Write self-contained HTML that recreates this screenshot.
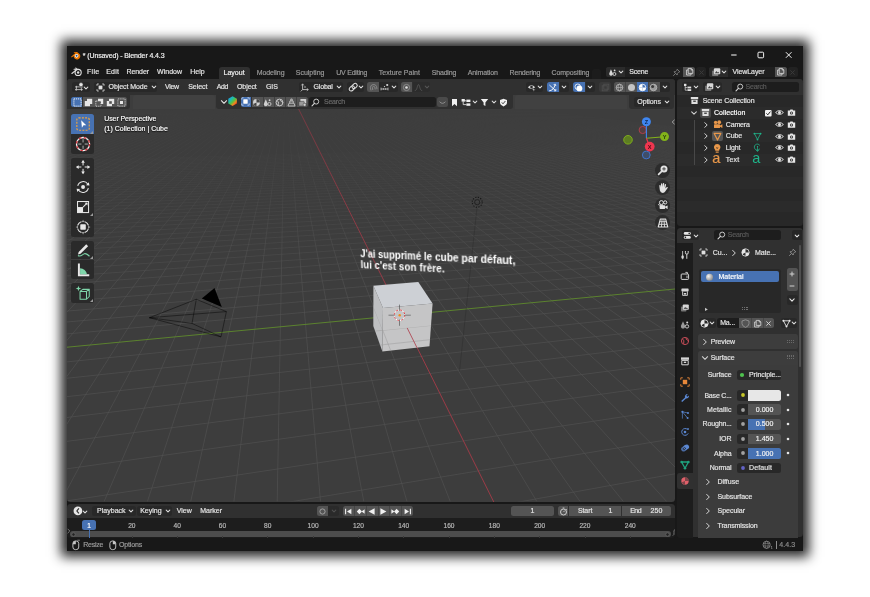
<!DOCTYPE html>
<html><head><meta charset="utf-8"><title>Blender</title>
<style>
html,body{margin:0;padding:0;background:#fff;}
body{width:870px;height:597px;overflow:hidden;position:relative;font-family:"Liberation Sans",sans-serif;}
#win{position:absolute;left:67px;top:46px;width:736px;height:505px;background:#181818;box-shadow:0 0 11px 6px rgba(0,0,0,0.85);}
#ui{position:absolute;left:0;top:0;width:870px;height:597px;overflow:hidden;will-change:transform;}
#ui div,#ui span,#ui svg{position:absolute;}
#ui span{white-space:nowrap;display:block;-webkit-text-stroke:0.18px;}
#ui svg{overflow:visible;}
</style></head><body>
<div id="win"></div>
<div id="ui">
<svg style="left:69.60px;top:49.90px;" width="10.8" height="9.7" viewBox="0 0 10 9"><path d="M1 6.2 L5.2 2.6 L3.6 2.6 L3.6 1.8 L6.6 1.8 L9 4 A3.1 3.1 0 1 1 3.4 5.6 L1.6 7 Z" fill="#ea7600"/><circle cx="6.1" cy="5.4" r="1.7" fill="#fff"/><circle cx="6.1" cy="5.4" r="0.95" fill="#265787"/></svg>
<span style="left:82.80px;top:50.80px;font-size:7.0px;line-height:9.80px;color:#f0f0f0;letter-spacing:-0.119px;">* (Unsaved) - Blender 4.4.3</span>
<svg style="left:729.00px;top:50.00px;" width="10" height="10" viewBox="0 0 10 10"><path d="M2.2 5 H7.6" stroke="#fff" stroke-width="1"/></svg>
<svg style="left:756.00px;top:50.00px;" width="10" height="10" viewBox="0 0 10 10"><rect x="2" y="2.2" width="5.6" height="5.6" rx="0.9" fill="none" stroke="#fff" stroke-width="0.95"/></svg>
<svg style="left:784.00px;top:50.00px;" width="10" height="10" viewBox="0 0 10 10"><path d="M1.9 2.2 L7.5 7.8 M7.5 2.2 L1.9 7.8" stroke="#fff" stroke-width="0.95"/></svg>
<svg style="left:71.20px;top:66.30px;" width="12.1" height="11" viewBox="0 0 11 10"><path d="M0.8 6.8 L5.4 3 L2.8 3 M5.4 3 L4.4 1.8" fill="none" stroke="#dedede" stroke-width="1" stroke-linecap="round"/><circle cx="6.5" cy="5.9" r="2.8" fill="none" stroke="#dedede" stroke-width="1"/><circle cx="6.5" cy="5.9" r="1.1" fill="#dedede"/></svg>
<span style="left:87.00px;top:66.70px;font-size:7.0px;line-height:9.80px;color:#e4e4e4;letter-spacing:0.305px;">File</span>
<span style="left:106.30px;top:66.70px;font-size:7.0px;line-height:9.80px;color:#e4e4e4;letter-spacing:0.159px;">Edit</span>
<span style="left:126.50px;top:66.70px;font-size:7.0px;line-height:9.80px;color:#e4e4e4;letter-spacing:-0.077px;">Render</span>
<span style="left:157.10px;top:66.70px;font-size:7.0px;line-height:9.80px;color:#e4e4e4;letter-spacing:0.000px;">Window</span>
<span style="left:190.20px;top:66.70px;font-size:7.0px;line-height:9.80px;color:#e4e4e4;letter-spacing:0.001px;">Help</span>
<div style="left:218.50px;top:67.30px;width:31.60px;height:12.20px;background:#303030;border-radius:3px 3px 0 0;"></div>
<span style="left:223.60px;top:67.70px;font-size:7.0px;line-height:9.80px;color:#f4f4f4;letter-spacing:-0.003px;">Layout</span>
<span style="left:256.70px;top:67.70px;font-size:7.0px;line-height:9.80px;color:#9a9a9a;letter-spacing:-0.076px;">Modeling</span>
<span style="left:295.80px;top:67.70px;font-size:7.0px;line-height:9.80px;color:#9a9a9a;letter-spacing:-0.022px;">Sculpting</span>
<span style="left:336.20px;top:67.70px;font-size:7.0px;line-height:9.80px;color:#9a9a9a;letter-spacing:-0.217px;">UV Editing</span>
<span style="left:378.70px;top:67.70px;font-size:7.0px;line-height:9.80px;color:#9a9a9a;letter-spacing:0.034px;">Texture Paint</span>
<span style="left:431.80px;top:67.70px;font-size:7.0px;line-height:9.80px;color:#9a9a9a;letter-spacing:-0.199px;">Shading</span>
<span style="left:467.70px;top:67.70px;font-size:7.0px;line-height:9.80px;color:#9a9a9a;letter-spacing:-0.125px;">Animation</span>
<span style="left:509.60px;top:67.70px;font-size:7.0px;line-height:9.80px;color:#9a9a9a;letter-spacing:-0.189px;">Rendering</span>
<span style="left:551.60px;top:67.70px;font-size:7.0px;line-height:9.80px;color:#9a9a9a;letter-spacing:-0.119px;">Compositing</span>
<div style="left:592.00px;top:68.50px;width:9.00px;height:10.50px;background:#1c1c1c;border-radius:2px 2px 0 0;"></div>
<div style="left:606.00px;top:66.70px;width:89.00px;height:10.10px;background:#282828;border-radius:2.5px;"></div>
<div style="left:606.00px;top:66.70px;width:18.50px;height:10.10px;background:#2b2b2b;border-radius:2.5px 0 0 2.5px;"></div>
<div style="left:625.20px;top:66.70px;width:57.80px;height:10.10px;background:#1f1f1f;"></div>
<div style="left:683.00px;top:66.70px;width:12.00px;height:10.10px;background:#555;border-radius:0 2.5px 2.5px 0;"></div>
<svg style="left:608.00px;top:67.50px;" width="9" height="9" viewBox="0 0 9 9"><path d="M2.6 1 L4.6 5.6 A2 2 0 1 1 0.8 5.6 Z" fill="#d8d8d8" transform="translate(0.6,0.3) scale(0.9)"/><circle cx="6.4" cy="6" r="1.5" fill="none" stroke="#d8d8d8" stroke-width="0.9"/><circle cx="6.6" cy="2.4" r="0.9" fill="#d8d8d8"/></svg>
<svg style="left:617.80px;top:69.00px;" width="6" height="6" viewBox="0 0 6 6"><path d="M1.20 2.10 L3 3.90 L4.80 2.10" fill="none" stroke="#dcdcdc" stroke-width="1.05" stroke-linecap="round" stroke-linejoin="round"/></svg>
<span style="left:629.20px;top:66.90px;font-size:7.0px;line-height:9.80px;color:#e4e4e4;letter-spacing:-0.190px;">Scene</span>
<svg style="left:671.50px;top:67.50px;" width="9" height="9" viewBox="0 0 9 9"><path d="M5.2 1.2 L7.8 3.8 L6.6 4.2 L5.4 5.4 L5.2 7 L2 3.8 L3.6 3.6 L4.8 2.4 Z M3.4 5.6 L1.2 7.8" fill="none" stroke="#8a8a8a" stroke-width="0.8" stroke-linejoin="round"/></svg>
<svg style="left:684.50px;top:67.30px;" width="9" height="9" viewBox="0 0 9 9"><path d="M3.2 1.4 H6.2 L7.8 3 V6.4 H3.2 Z M6.2 1.4 V3 H7.8" fill="none" stroke="#e0e0e0" stroke-width="0.8" stroke-linejoin="round"/><path d="M3.2 3 H1.6 V8 H6 V6.4" fill="none" stroke="#e0e0e0" stroke-width="0.8" stroke-linejoin="round"/></svg>
<div style="left:695.60px;top:66.70px;width:10.40px;height:10.10px;background:#222;border-radius:2.5px;"></div>
<svg style="left:696.50px;top:67.50px;" width="9" height="9" viewBox="0 0 9 9"><path d="M2.4 2.4 L6.6 6.6 M6.6 2.4 L2.4 6.6" stroke="#3c3c3c" stroke-width="0.9"/></svg>
<div style="left:709.30px;top:66.70px;width:77.70px;height:10.10px;background:#282828;border-radius:2.5px;"></div>
<div style="left:709.30px;top:66.70px;width:18.30px;height:10.10px;background:#2b2b2b;border-radius:2.5px 0 0 2.5px;"></div>
<div style="left:728.40px;top:66.70px;width:46.50px;height:10.10px;background:#1f1f1f;"></div>
<div style="left:774.90px;top:66.70px;width:12.00px;height:10.10px;background:#555;border-radius:0 2.5px 2.5px 0;"></div>
<svg style="left:710.70px;top:66.80px;" width="10.2" height="10.2" viewBox="0 0 9 9"><rect x="1" y="3" width="5.4" height="5" rx="0.8" fill="#777"/><rect x="2.6" y="1.2" width="5.6" height="5.2" rx="0.8" fill="#d8d8d8"/><path d="M3.4 5.6 L4.8 3.6 L5.8 4.8 L6.4 4.2 L7.4 5.6 Z" fill="#444"/></svg>
<svg style="left:721.00px;top:69.00px;" width="6" height="6" viewBox="0 0 6 6"><path d="M1.20 2.10 L3 3.90 L4.80 2.10" fill="none" stroke="#dcdcdc" stroke-width="1.05" stroke-linecap="round" stroke-linejoin="round"/></svg>
<span style="left:732.60px;top:66.90px;font-size:7.0px;line-height:9.80px;color:#e4e4e4;letter-spacing:-0.084px;">ViewLayer</span>
<svg style="left:776.40px;top:67.30px;" width="9" height="9" viewBox="0 0 9 9"><path d="M3.2 1.4 H6.2 L7.8 3 V6.4 H3.2 Z M6.2 1.4 V3 H7.8" fill="none" stroke="#e0e0e0" stroke-width="0.8" stroke-linejoin="round"/><path d="M3.2 3 H1.6 V8 H6 V6.4" fill="none" stroke="#e0e0e0" stroke-width="0.8" stroke-linejoin="round"/></svg>
<div style="left:787.50px;top:66.70px;width:10.50px;height:10.10px;background:#222;border-radius:2.5px;"></div>
<svg style="left:788.30px;top:67.50px;" width="9" height="9" viewBox="0 0 9 9"><path d="M2.4 2.4 L6.6 6.6 M6.6 2.4 L2.4 6.6" stroke="#3c3c3c" stroke-width="0.9"/></svg>
<div id="vp" style="left:67px;top:79.3px;width:608.4px;height:422.4px;background:#3d3d3d;border-radius:3.5px;overflow:hidden;">
<svg style="left:0;top:0" width="608.4" height="422.4" viewBox="0 0 608.4 422.4">
<defs><linearGradient id="fade" gradientUnits="userSpaceOnUse" x1="0" y1="26.7" x2="0" y2="190.7"><stop offset="0" stop-color="#000"/><stop offset="1" stop-color="#fff"/></linearGradient>
<linearGradient id="fade2" gradientUnits="userSpaceOnUse" x1="0" y1="45.7" x2="0" y2="230.7"><stop offset="0" stop-color="#000"/><stop offset="1" stop-color="#fff"/></linearGradient>
<linearGradient id="redg" gradientUnits="userSpaceOnUse" x1="0" y1="20.7" x2="0" y2="220.7"><stop offset="0" stop-color="#7a3942"/><stop offset="1" stop-color="#a53a47"/></linearGradient>
<mask id="gm"><rect x="0" y="0" width="608.4" height="422.4" fill="url(#fade)"/></mask>
<mask id="gm2"><rect x="0" y="0" width="608.4" height="422.4" fill="url(#fade2)"/></mask></defs>
<g mask="url(#gm)"><path d="M138.4 16.7 L-2197.6 427.4 M139.8 16.7 L-2153.8 427.4 M141.3 16.7 L-2110.0 427.4 M142.7 16.7 L-2066.3 427.4 M144.1 16.7 L-2022.5 427.4 M145.6 16.7 L-1978.7 427.4 M147.0 16.7 L-1934.9 427.4 M148.5 16.7 L-1891.1 427.4 M149.9 16.7 L-1847.4 427.4 M151.4 16.7 L-1803.6 427.4 M152.8 16.7 L-1759.8 427.4 M154.2 16.7 L-1716.0 427.4 M155.7 16.7 L-1672.3 427.4 M157.1 16.7 L-1628.5 427.4 M158.6 16.7 L-1584.7 427.4 M160.0 16.7 L-1540.9 427.4 M161.5 16.7 L-1497.2 427.4 M162.9 16.7 L-1453.4 427.4 M164.3 16.7 L-1409.6 427.4 M165.8 16.7 L-1365.8 427.4 M167.2 16.7 L-1322.1 427.4 M168.7 16.7 L-1278.3 427.4 M170.1 16.7 L-1234.5 427.4 M171.6 16.7 L-1190.7 427.4 M173.0 16.7 L-1147.0 427.4 M174.4 16.7 L-1103.2 427.4 M175.9 16.7 L-1059.4 427.4 M177.3 16.7 L-1015.6 427.4 M178.8 16.7 L-971.8 427.4 M180.2 16.7 L-928.1 427.4 M181.7 16.7 L-884.3 427.4 M183.1 16.7 L-840.5 427.4 M184.5 16.7 L-796.7 427.4 M186.0 16.7 L-753.0 427.4 M187.4 16.7 L-709.2 427.4 M188.9 16.7 L-665.4 427.4 M190.3 16.7 L-621.6 427.4 M191.8 16.7 L-577.9 427.4 M193.2 16.7 L-534.1 427.4 M194.7 16.7 L-490.3 427.4 M196.1 16.7 L-446.5 427.4 M197.5 16.7 L-402.8 427.4 M199.0 16.7 L-359.0 427.4 M200.4 16.7 L-315.2 427.4 M201.9 16.7 L-271.4 427.4 M203.3 16.7 L-227.7 427.4 M204.8 16.7 L-183.9 427.4 M206.2 16.7 L-140.1 427.4 M207.6 16.7 L-96.3 427.4 M209.1 16.7 L-52.6 427.4 M210.5 16.7 L-8.8 427.4 M212.0 16.7 L35.0 427.4 M213.4 16.7 L78.8 427.4 M214.9 16.7 L122.6 427.4 M216.3 16.7 L166.3 427.4 M217.7 16.7 L210.1 427.4 M219.2 16.7 L253.9 427.4 M220.6 16.7 L297.7 427.4 M222.1 16.7 L341.4 427.4 M223.5 16.7 L385.2 427.4 M226.4 16.7 L472.8 427.4 M227.8 16.7 L516.5 427.4 M229.3 16.7 L560.3 427.4 M230.7 16.7 L604.1 427.4 M232.2 16.7 L647.9 427.4 M233.6 16.7 L691.6 427.4 M235.1 16.7 L735.4 427.4 M236.5 16.7 L779.2 427.4 M237.9 16.7 L823.0 427.4 M239.4 16.7 L866.7 427.4 M240.8 16.7 L910.5 427.4 M242.3 16.7 L954.3 427.4 M243.7 16.7 L998.1 427.4 M245.2 16.7 L1041.9 427.4 M246.6 16.7 L1085.6 427.4 M248.0 16.7 L1129.4 427.4 M249.5 16.7 L1173.2 427.4 M250.9 16.7 L1217.0 427.4 M252.4 16.7 L1260.7 427.4 M253.8 16.7 L1304.5 427.4 M255.3 16.7 L1348.3 427.4 M256.7 16.7 L1392.1 427.4 M258.1 16.7 L1435.8 427.4 M259.6 16.7 L1479.6 427.4 M261.0 16.7 L1523.4 427.4 M262.5 16.7 L1567.2 427.4 M263.9 16.7 L1610.9 427.4 M265.4 16.7 L1654.7 427.4 M266.8 16.7 L1698.5 427.4 M268.2 16.7 L1742.3 427.4 M269.7 16.7 L1786.0 427.4 M271.1 16.7 L1829.8 427.4 M272.6 16.7 L1873.6 427.4 M274.0 16.7 L1917.4 427.4 M275.5 16.7 L1961.1 427.4 M276.9 16.7 L2004.9 427.4 M278.3 16.7 L2048.7 427.4 M279.8 16.7 L2092.5 427.4 M281.2 16.7 L2136.3 427.4 M282.7 16.7 L2180.0 427.4 M284.1 16.7 L2223.8 427.4 M285.6 16.7 L2267.6 427.4 M287.0 16.7 L2311.4 427.4 M288.4 16.7 L2355.1 427.4 M289.9 16.7 L2398.9 427.4 M291.3 16.7 L2442.7 427.4 M292.8 16.7 L2486.5 427.4 M294.2 16.7 L2530.2 427.4 M295.7 16.7 L2574.0 427.4 M297.1 16.7 L2617.8 427.4 M298.6 16.7 L2661.6 427.4 M300.0 16.7 L2705.3 427.4 M301.4 16.7 L2749.1 427.4 M302.9 16.7 L2792.9 427.4 M304.3 16.7 L2836.7 427.4 M305.8 16.7 L2880.4 427.4 M307.2 16.7 L2924.2 427.4 M308.7 16.7 L2968.0 427.4 M310.1 16.7 L3011.8 427.4 M311.5 16.7 L3055.6 427.4 M313.0 16.7 L3099.3 427.4 M314.4 16.7 L3143.1 427.4 M315.9 16.7 L3186.9 427.4 M317.3 16.7 L3230.7 427.4 M318.8 16.7 L3274.4 427.4 M320.2 16.7 L3318.2 427.4 M321.6 16.7 L3362.0 427.4 M323.1 16.7 L3405.8 427.4 M324.5 16.7 L3449.5 427.4 M326.0 16.7 L3493.3 427.4 M327.4 16.7 L3537.1 427.4 M328.9 16.7 L3580.9 427.4 M330.3 16.7 L3624.6 427.4 M331.7 16.7 L3668.4 427.4 M333.2 16.7 L3712.2 427.4 M334.6 16.7 L3756.0 427.4 M336.1 16.7 L3799.7 427.4 M337.5 16.7 L3843.5 427.4 M339.0 16.7 L3887.3 427.4" stroke="#525252" stroke-width="0.65" fill="none"/></g>
<g mask="url(#gm2)"><path d="M-5.0 81.9 L613.4 64.3 M-5.0 83.2 L613.4 65.3 M-5.0 84.5 L613.4 66.3 M-5.0 85.8 L613.4 67.3 M-5.0 87.2 L613.4 68.4 M-5.0 88.6 L613.4 69.5 M-5.0 90.1 L613.4 70.6 M-5.0 91.6 L613.4 71.8 M-5.0 93.2 L613.4 73.1 M-5.0 94.9 L613.4 74.3 M-5.0 96.6 L613.4 75.7 M-5.0 98.3 L613.4 77.0 M-5.0 100.2 L613.4 78.5 M-5.0 102.1 L613.4 80.0 M-5.0 104.1 L613.4 81.5 M-5.0 106.1 L613.4 83.1 M-5.0 108.3 L613.4 84.8 M-5.0 110.5 L613.4 86.5 M-5.0 112.9 L613.4 88.3 M-5.0 115.3 L613.4 90.2 M-5.0 117.9 L613.4 92.2 M-5.0 120.5 L613.4 94.3 M-5.0 123.3 L613.4 96.5 M-5.0 126.3 L613.4 98.8 M-5.0 129.3 L613.4 101.2 M-5.0 132.6 L613.4 103.7 M-5.0 136.0 L613.4 106.3 M-5.0 139.6 L613.4 109.1 M-5.0 143.4 L613.4 112.1 M-5.0 147.4 L613.4 115.2 M-5.0 151.6 L613.4 118.5 M-5.0 156.1 L613.4 122.0 M-5.0 160.9 L613.4 125.7 M-5.0 166.0 L613.4 129.7 M-5.0 171.4 L613.4 133.9 M-5.0 177.2 L613.4 138.4 M-5.0 183.4 L613.4 143.2 M-5.0 190.1 L613.4 148.4 M-5.0 197.3 L613.4 154.0 M-5.0 205.1 L613.4 160.0 M-5.0 213.5 L613.4 166.5 M-5.0 222.6 L613.4 173.6 M-5.0 232.5 L613.4 181.4 M-5.0 243.4 L613.4 189.8 M-5.0 255.4 L613.4 199.2 M-5.0 283.4 L613.4 220.9 M-5.0 299.8 L613.4 233.6 M-5.0 318.2 L613.4 248.0 M-5.0 339.1 L613.4 264.2 M-5.0 363.0 L613.4 282.8 M-5.0 390.5 L613.4 304.2 M-5.0 422.6 L613.4 329.1 M-5.0 460.5 L613.4 358.6 M-5.0 505.8 L613.4 393.8 M-5.0 561.2 L613.4 436.9 M-5.0 630.2 L613.4 490.5 M-5.0 718.7 L613.4 559.3 M-5.0 836.2 L613.4 650.6 M-5.0 999.9 L613.4 777.9 M-5.0 1243.6 L613.4 967.3 M-5.0 1644.9 L613.4 1279.3 M-5.0 2429.9 L613.4 1889.6 M-5.0 4652.6 L613.4 3617.5" stroke="#525252" stroke-width="0.65" fill="none"/></g>
<path d="M225.0 16.7 L429.0 427.4" stroke="url(#redg)" stroke-width="0.9" fill="none"/>
<path d="M-5.0 268.7 L613.4 209.5" stroke="#5f8a2c" stroke-width="0.9" fill="none"/>
</svg>
</div>
<div style="left:67.00px;top:79.30px;width:608.40px;height:15.70px;background:#303030;border-radius:3.5px 3.5px 0 0;"></div>
<div style="left:67.00px;top:94.80px;width:63.00px;height:14.00px;background:#303030;border-radius:0 0 3px 0;"></div>
<div style="left:132.60px;top:95.30px;width:82.10px;height:13.50px;background:#414141;border-radius:3px 3px 0 0;"></div>
<div style="left:216.00px;top:94.80px;width:297.00px;height:14.00px;background:#303030;border-radius:0 0 3px 3px;"></div>
<div style="left:514.50px;top:95.30px;width:112.90px;height:13.50px;background:#414141;border-radius:3px 3px 0 0;"></div>
<div style="left:628.80px;top:94.80px;width:45.00px;height:14.10px;background:#303030;border-radius:0 0 3px 3px;"></div>
<div style="left:72.10px;top:82.00px;width:17.70px;height:10.30px;background:#282828;border-radius:2.5px;"></div>
<svg style="left:73.80px;top:82.20px;" width="10" height="10" viewBox="0 0 10 10"><path d="M1 4.9 H8.8 M1 7.6 H8.8 M2.6 3.8 L2.2 8.8 M7.2 5.4 L7.6 8.8" stroke="#cfcfcf" stroke-width="0.8" fill="none"/><circle cx="7" cy="2.7" r="2.1" fill="#e6e6e6" stroke="#282828" stroke-width="0.5"/></svg>
<svg style="left:83.30px;top:84.50px;" width="6" height="6" viewBox="0 0 6 6"><path d="M1.20 2.10 L3 3.90 L4.80 2.10" fill="none" stroke="#dcdcdc" stroke-width="1.05" stroke-linecap="round" stroke-linejoin="round"/></svg>
<div style="left:94.10px;top:82.00px;width:63.20px;height:10.30px;background:#282828;border-radius:2.5px;"></div>
<svg style="left:95.60px;top:82.60px;" width="9" height="9" viewBox="0 0 9 9"><rect x="2.6" y="2.6" width="3.8" height="3.8" fill="#e0e0e0"/><path d="M1 2.8 V1 H2.8 M6.2 1 H8 V2.8 M8 6.2 V8 H6.2 M2.8 8 H1 V6.2" fill="none" stroke="#e0e0e0" stroke-width="0.8"/></svg>
<span style="left:108.50px;top:82.20px;font-size:7.0px;line-height:9.80px;color:#e4e4e4;letter-spacing:-0.062px;">Object Mode</span>
<svg style="left:150.60px;top:84.30px;" width="6" height="6" viewBox="0 0 6 6"><path d="M1.20 2.10 L3 3.90 L4.80 2.10" fill="none" stroke="#dcdcdc" stroke-width="1.05" stroke-linecap="round" stroke-linejoin="round"/></svg>
<span style="left:164.90px;top:82.20px;font-size:7.0px;line-height:9.80px;color:#e4e4e4;letter-spacing:-0.287px;">View</span>
<span style="left:188.20px;top:82.20px;font-size:7.0px;line-height:9.80px;color:#e4e4e4;letter-spacing:-0.043px;">Select</span>
<span style="left:216.80px;top:82.20px;font-size:7.0px;line-height:9.80px;color:#e4e4e4;letter-spacing:-0.385px;">Add</span>
<span style="left:237.00px;top:82.20px;font-size:7.0px;line-height:9.80px;color:#e4e4e4;letter-spacing:-0.089px;">Object</span>
<span style="left:266.00px;top:82.20px;font-size:7.0px;line-height:9.80px;color:#e4e4e4;letter-spacing:-0.086px;">GIS</span>
<div style="left:298.60px;top:82.00px;width:44.00px;height:10.30px;background:#282828;border-radius:2.5px;"></div>
<svg style="left:299.80px;top:82.60px;" width="9" height="9" viewBox="0 0 9 9"><path d="M2.6 1.2 V6.6 H8 M2.6 6.6 L0.8 8.4" fill="none" stroke="#d8d8d8" stroke-width="0.8"/><path d="M1.4 2.4 L2.6 0.8 L3.8 2.4 M6.8 5.4 L8.4 6.6 L6.8 7.8" fill="none" stroke="#d8d8d8" stroke-width="0.7"/><circle cx="5" cy="4" r="0.7" fill="#d8d8d8"/></svg>
<span style="left:313.50px;top:82.20px;font-size:7.0px;line-height:9.80px;color:#e4e4e4;letter-spacing:-0.172px;">Global</span>
<svg style="left:335.80px;top:84.30px;" width="6" height="6" viewBox="0 0 6 6"><path d="M1.20 2.10 L3 3.90 L4.80 2.10" fill="none" stroke="#dcdcdc" stroke-width="1.05" stroke-linecap="round" stroke-linejoin="round"/></svg>
<div style="left:347.00px;top:82.00px;width:17.00px;height:10.30px;background:#282828;border-radius:2.5px;"></div>
<svg style="left:347.90px;top:82.00px;" width="10.4" height="10.4" viewBox="0 0 9 9"><rect x="0.4" y="2.8" width="5" height="3.4" rx="1.7" fill="none" stroke="#e0e0e0" stroke-width="0.9" transform="rotate(-42 4.5 4.5)"/><rect x="3.6" y="2.8" width="5" height="3.4" rx="1.7" fill="none" stroke="#e0e0e0" stroke-width="0.9" transform="rotate(-42 4.5 4.5)"/></svg>
<svg style="left:357.80px;top:84.30px;" width="6" height="6" viewBox="0 0 6 6"><path d="M1.20 2.10 L3 3.90 L4.80 2.10" fill="none" stroke="#dcdcdc" stroke-width="1.05" stroke-linecap="round" stroke-linejoin="round"/></svg>
<div style="left:367.30px;top:82.00px;width:11.40px;height:10.30px;background:#545454;border-radius:2.5px 0 0 2.5px;"></div>
<svg style="left:368.50px;top:82.60px;" width="9" height="9" viewBox="0 0 9 9"><path d="M2 7.4 L1.4 4.6 A3.2 3.2 0 0 1 7.6 3.6 L8 6.2 M3.8 7 L3.4 4.6 A1.3 1.3 0 0 1 5.8 4 L6.2 6.4" fill="none" stroke="#8c8c8c" stroke-width="0.9"/></svg>
<div style="left:379.30px;top:82.00px;width:18.40px;height:10.30px;background:#282828;border-radius:0 2.5px 2.5px 0;"></div>
<svg style="left:380.20px;top:82.60px;" width="9" height="9" viewBox="0 0 9 9"><path d="M1 6 H8 M1 4.6 V7.4 M8 4.6 V7.4 M3.4 5.2 V6.8 M5.6 5.2 V6.8" stroke="#d8d8d8" stroke-width="0.7" fill="none"/><circle cx="7.2" cy="2" r="1.1" fill="#d8d8d8"/><circle cx="4.5" cy="3.6" r="0.6" fill="#d8d8d8"/></svg>
<svg style="left:390.90px;top:84.30px;" width="6" height="6" viewBox="0 0 6 6"><path d="M1.20 2.10 L3 3.90 L4.80 2.10" fill="none" stroke="#dcdcdc" stroke-width="1.05" stroke-linecap="round" stroke-linejoin="round"/></svg>
<div style="left:400.70px;top:82.00px;width:11.40px;height:10.30px;background:#545454;border-radius:2.5px 0 0 2.5px;"></div>
<svg style="left:401.90px;top:82.60px;" width="9" height="9" viewBox="0 0 9 9"><circle cx="4.5" cy="4.5" r="3.1" fill="none" stroke="#999" stroke-width="0.8"/><circle cx="4.5" cy="4.5" r="1.3" fill="#e0e0e0"/></svg>
<div style="left:412.70px;top:82.00px;width:17.30px;height:10.30px;background:#2c2c2c;border-radius:0 2.5px 2.5px 0;"></div>
<svg style="left:414.40px;top:82.60px;" width="9" height="9" viewBox="0 0 9 9"><path d="M0.8 7.6 C3.4 7.6 3.2 1.6 4.5 1.6 C5.8 1.6 5.6 7.6 8.2 7.6" fill="none" stroke="#5a5a5a" stroke-width="0.8"/></svg>
<svg style="left:423.60px;top:84.30px;" width="6" height="6" viewBox="0 0 6 6"><path d="M1.20 2.10 L3 3.90 L4.80 2.10" fill="none" stroke="#555" stroke-width="1.05" stroke-linecap="round" stroke-linejoin="round"/></svg>
<div style="left:525.50px;top:82.00px;width:17.70px;height:10.30px;background:#282828;border-radius:2.5px;"></div>
<svg style="left:526.80px;top:82.60px;" width="9" height="9" viewBox="0 0 9 9"><path d="M0.8 4.2 Q4.5 0.4 8.2 4.2 Q4.5 7.4 0.8 4.2 Z" fill="#d8d8d8"/><circle cx="4.5" cy="4" r="1.3" fill="#282828"/><path d="M5 5.4 L7 8.4 L7.4 6.8 L8.8 6.6 Z" fill="#d8d8d8" stroke="#282828" stroke-width="0.4"/></svg>
<svg style="left:537.00px;top:84.30px;" width="6" height="6" viewBox="0 0 6 6"><path d="M1.20 2.10 L3 3.90 L4.80 2.10" fill="none" stroke="#dcdcdc" stroke-width="1.05" stroke-linecap="round" stroke-linejoin="round"/></svg>
<div style="left:547.00px;top:82.00px;width:11.90px;height:10.30px;background:#4772b3;border-radius:2.5px 0 0 2.5px;"></div>
<svg style="left:548.40px;top:82.60px;" width="9" height="9" viewBox="0 0 9 9"><path d="M1.2 7.8 Q5.6 7.4 7 2" fill="none" stroke="#fff" stroke-width="0.9"/><path d="M1.4 2 L7.6 7.6" stroke="#fff" stroke-width="0.9"/><path d="M5.6 1.6 L7.4 1.2 L7.8 3" fill="none" stroke="#fff" stroke-width="0.8"/><path d="M6 7.8 L7.8 7.8 L7.8 6" fill="none" stroke="#fff" stroke-width="0.8"/></svg>
<div style="left:559.50px;top:82.00px;width:9.50px;height:10.30px;background:#282828;border-radius:0 2.5px 2.5px 0;"></div>
<svg style="left:561.20px;top:84.30px;" width="6" height="6" viewBox="0 0 6 6"><path d="M1.20 2.10 L3 3.90 L4.80 2.10" fill="none" stroke="#dcdcdc" stroke-width="1.05" stroke-linecap="round" stroke-linejoin="round"/></svg>
<div style="left:573.00px;top:82.00px;width:11.90px;height:10.30px;background:#4772b3;border-radius:2.5px 0 0 2.5px;"></div>
<svg style="left:574.40px;top:82.60px;" width="9" height="9" viewBox="0 0 9 9"><circle cx="3.8" cy="3.8" r="2.8" fill="none" stroke="#fff" stroke-width="0.8"/><circle cx="5.4" cy="5.4" r="2.9" fill="#fff"/></svg>
<div style="left:585.50px;top:82.00px;width:9.50px;height:10.30px;background:#282828;border-radius:0 2.5px 2.5px 0;"></div>
<svg style="left:587.20px;top:84.30px;" width="6" height="6" viewBox="0 0 6 6"><path d="M1.20 2.10 L3 3.90 L4.80 2.10" fill="none" stroke="#dcdcdc" stroke-width="1.05" stroke-linecap="round" stroke-linejoin="round"/></svg>
<div style="left:599.30px;top:82.00px;width:11.70px;height:10.30px;background:#393939;border-radius:2.5px;"></div>
<svg style="left:600.70px;top:82.60px;" width="9" height="9" viewBox="0 0 9 9"><rect x="1.2" y="2.8" width="5" height="5" fill="none" stroke="#505050" stroke-width="0.8"/><rect x="2.8" y="1.2" width="5" height="5" fill="none" stroke="#505050" stroke-width="0.8"/></svg>
<div style="left:614.00px;top:82.00px;width:45.50px;height:10.30px;background:#545454;border-radius:2.5px 0 0 2.5px;"></div>
<div style="left:625.40px;top:82.00px;width:0.40px;height:10.30px;background:#444;"></div>
<div style="left:648.20px;top:82.00px;width:0.40px;height:10.30px;background:#444;"></div>
<div style="left:637.00px;top:82.00px;width:11.30px;height:10.30px;background:#4772b3;"></div>
<svg style="left:615.30px;top:82.60px;" width="9" height="9" viewBox="0 0 9 9"><circle cx="4.5" cy="4.5" r="3.3" fill="none" stroke="#bdbdbd" stroke-width="0.8"/><ellipse cx="4.5" cy="4.5" rx="1.5" ry="3.3" fill="none" stroke="#bdbdbd" stroke-width="0.6"/><path d="M1.2 4.5 H7.8" stroke="#bdbdbd" stroke-width="0.6"/></svg>
<svg style="left:626.70px;top:82.60px;" width="9" height="9" viewBox="0 0 9 9"><circle cx="4.5" cy="4.5" r="3.5" fill="#c4c4c4"/></svg>
<svg style="left:638.10px;top:82.60px;" width="9" height="9" viewBox="0 0 9 9"><circle cx="4.5" cy="4.5" r="3.3" fill="none" stroke="#fff" stroke-width="0.8"/><path d="M4.5 1.2 A3.3 3.3 0 0 0 1.2 4.5 H4.5 Z" fill="#fff"/><path d="M4.5 4.5 H7.8 A3.3 3.3 0 0 1 4.5 7.8 Z" fill="#fff"/><path d="M4.5 4.5 V7.8 A3.3 3.3 0 0 1 1.2 4.5 Z" fill="#fff"/></svg>
<svg style="left:649.40px;top:82.60px;" width="9" height="9" viewBox="0 0 9 9"><circle cx="4.5" cy="4.5" r="3.3" fill="#9a9a9a" stroke="#bdbdbd" stroke-width="0.8"/><circle cx="3.6" cy="3.6" r="1.5" fill="#3a3a3a"/></svg>
<div style="left:660.10px;top:82.00px;width:9.50px;height:10.30px;background:#282828;border-radius:0 2.5px 2.5px 0;"></div>
<svg style="left:661.90px;top:84.30px;" width="6" height="6" viewBox="0 0 6 6"><path d="M1.20 2.10 L3 3.90 L4.80 2.10" fill="none" stroke="#dcdcdc" stroke-width="1.05" stroke-linecap="round" stroke-linejoin="round"/></svg>
<div style="left:71.40px;top:96.60px;width:11.10px;height:10.70px;background:#4772b3;border-radius:2.5px 0 0 2.5px;"></div>
<div style="left:83.00px;top:96.60px;width:10.60px;height:10.70px;background:#545454;"></div>
<div style="left:94.10px;top:96.60px;width:10.60px;height:10.70px;background:#545454;"></div>
<div style="left:105.20px;top:96.60px;width:10.60px;height:10.70px;background:#545454;"></div>
<div style="left:116.30px;top:96.60px;width:10.60px;height:10.70px;background:#545454;border-radius:0 2.5px 2.5px 0;"></div>
<svg style="left:72.50px;top:97.70px;" width="9" height="9" viewBox="0 0 9 9"><rect x="0.9" y="0.9" width="7.2" height="7.2" fill="none" stroke="#fff" stroke-width="0.9" stroke-dasharray="1.2 0.8"/></svg>
<svg style="left:83.80px;top:97.70px;" width="9" height="9" viewBox="0 0 9 9"><rect x="0.8" y="3" width="5.2" height="5.2" fill="#e6e6e6"/><rect x="3" y="0.8" width="5.2" height="5.2" fill="#e6e6e6"/></svg>
<svg style="left:94.90px;top:97.70px;" width="9" height="9" viewBox="0 0 9 9"><rect x="0.8" y="3" width="5.2" height="5.2" fill="none" stroke="#e6e6e6" stroke-width="0.8" stroke-dasharray="1 0.8"/><path d="M3 0.8 H8.2 V6 H6 V3 H3 Z" fill="#e6e6e6"/></svg>
<svg style="left:106.00px;top:97.70px;" width="9" height="9" viewBox="0 0 9 9"><rect x="0.8" y="3" width="5.2" height="5.2" fill="#e6e6e6"/><rect x="3" y="0.8" width="5.2" height="5.2" fill="#e6e6e6"/><rect x="3.2" y="3.2" width="2.6" height="2.6" fill="#545454"/></svg>
<svg style="left:117.10px;top:97.70px;" width="9" height="9" viewBox="0 0 9 9"><rect x="0.9" y="0.9" width="7.2" height="7.2" fill="none" stroke="#e6e6e6" stroke-width="0.8" stroke-dasharray="1 0.8"/><rect x="3" y="3" width="3" height="3" fill="#e6e6e6"/></svg>
<svg style="left:220.50px;top:98.80px;" width="6" height="6" viewBox="0 0 6 6"><path d="M0.39 1.70 L3 4.30 L5.61 1.70" fill="none" stroke="#eaeaea" stroke-width="1.05" stroke-linecap="round" stroke-linejoin="round"/></svg>
<svg style="left:228.20px;top:96.40px;" width="9.2" height="10.4" viewBox="0 0 9.2 10.4"><defs><linearGradient id="hx" x1="0.15" y1="0.1" x2="0.85" y2="0.9"><stop offset="0" stop-color="#1fa0e8"/><stop offset="0.3" stop-color="#22c0a0"/><stop offset="0.55" stop-color="#58c040"/><stop offset="0.78" stop-color="#f08a20"/><stop offset="1" stop-color="#f03020"/></linearGradient></defs><path d="M4.6 0.3 L8.9 2.8 V7.6 L4.6 10.1 L0.3 7.6 V2.8 Z" fill="url(#hx)"/></svg>
<div style="left:240.60px;top:96.60px;width:10.70px;height:10.70px;background:#4772b3;border-radius:2.5px 0 0 2.5px;"></div>
<svg style="left:241.40px;top:97.40px;" width="9" height="9" viewBox="0 0 9 9"><rect x="2.3" y="2.3" width="4.4" height="4.4" rx="0.4" fill="#fff"/><path d="M0.8 2.6 V0.8 H2.6 M6.4 0.8 H8.2 V2.6 M8.2 6.4 V8.2 H6.4 M2.6 8.2 H0.8 V6.4" fill="none" stroke="#c8d6ee" stroke-width="0.8"/></svg>
<div style="left:251.60px;top:96.60px;width:56.20px;height:10.70px;background:#545454;border-radius:0 2.5px 2.5px 0;"></div>
<div style="left:262.60px;top:96.60px;width:0.50px;height:10.70px;background:#3f3f3f;"></div>
<div style="left:273.80px;top:96.60px;width:0.50px;height:10.70px;background:#3f3f3f;"></div>
<div style="left:285.00px;top:96.60px;width:0.50px;height:10.70px;background:#3f3f3f;"></div>
<div style="left:296.30px;top:96.60px;width:0.50px;height:10.70px;background:#3f3f3f;"></div>
<svg style="left:252.30px;top:97.70px;" width="9" height="9" viewBox="0 0 9 9"><circle cx="4.5" cy="4.5" r="3.4" fill="#d0d0d0"/><path d="M4.5 4.5 L4.5 1.1 A3.4 3.4 0 0 1 7.9 4.5 Z" fill="#444"/><path d="M4.5 4.5 L1.4 6 A3.4 3.4 0 0 0 4.5 7.9 Z" fill="#444"/></svg>
<svg style="left:263.40px;top:97.70px;" width="9" height="9" viewBox="0 0 9 9"><path d="M2.8 1.2 L4.6 5.4 A2 2 0 1 1 1 5.4 Z" fill="#cfcfcf"/><circle cx="6.4" cy="6" r="1.6" fill="none" stroke="#cfcfcf" stroke-width="0.9"/><circle cx="6.6" cy="2.2" r="0.9" fill="#cfcfcf"/></svg>
<svg style="left:275.10px;top:97.70px;" width="9" height="9" viewBox="0 0 9 9"><circle cx="4.5" cy="4.5" r="3.4" fill="none" stroke="#cfcfcf" stroke-width="0.9"/><path d="M2 2.6 Q4 3.6 3.4 5.4 T4 7.6 M5.6 1.4 Q5 3 6.6 3.6 T7.6 5.4" fill="none" stroke="#cfcfcf" stroke-width="0.9"/></svg>
<svg style="left:287.00px;top:97.70px;" width="9" height="9" viewBox="0 0 9 9"><path d="M1 8 H8 L7 5.2 H2 Z M2.8 5.2 V3 H6.2 V5.2 M3.8 3 V1 H5.2 V3" fill="none" stroke="#cfcfcf" stroke-width="0.8" stroke-linejoin="round"/></svg>
<svg style="left:297.90px;top:97.70px;" width="9" height="9" viewBox="0 0 9 9"><rect x="2.4" y="1" width="5.8" height="4.6" rx="0.6" fill="#cfcfcf"/><rect x="0.8" y="3.4" width="5.4" height="4.6" rx="0.6" fill="#9a9a9a" stroke="#303030" stroke-width="0.5"/><circle cx="6.6" cy="6.8" r="1.5" fill="#cfcfcf" stroke="#303030" stroke-width="0.4"/></svg>
<div style="left:309.00px;top:96.60px;width:126.60px;height:10.70px;background:#1d1d1d;border-radius:2.5px;"></div>
<svg style="left:310.50px;top:97.90px;" width="9" height="9" viewBox="0 0 9 9"><circle cx="5.2" cy="3.6" r="2.5" fill="none" stroke="#d8d8d8" stroke-width="0.9"/><path d="M3.4 5.4 L1 7.9" stroke="#d8d8d8" stroke-width="1.1" stroke-linecap="round"/></svg>
<span style="left:323.90px;top:97.10px;font-size:7.0px;line-height:9.80px;color:#6a6a6a;letter-spacing:-0.180px;">Search</span>
<div style="left:436.90px;top:96.60px;width:11.40px;height:10.70px;background:#4a4a4a;border-radius:2.5px;"></div>
<svg style="left:438.10px;top:97.70px;" width="9" height="9" viewBox="0 0 9 9"><path d="M1.8 4 Q4.5 7 7.2 4" fill="none" stroke="#9a9a9a" stroke-width="0.8" stroke-linecap="round"/></svg>
<svg style="left:449.70px;top:97.70px;" width="9" height="9" viewBox="0 0 9 9"><path d="M2 1 H7 V8.2 L4.5 6 L2 8.2 Z" fill="#f0f0f0"/></svg>
<svg style="left:461.00px;top:97.70px;" width="10" height="9" viewBox="0 0 10 9"><rect x="0.6" y="1" width="3.2" height="2.6" fill="#f0f0f0"/><rect x="5.4" y="1.6" width="4" height="2.4" fill="#f0f0f0"/><rect x="5.4" y="5.4" width="4" height="2.4" fill="#f0f0f0"/><path d="M2.2 3.6 V6.6 H5.4 M2.2 2.8 H5.4" fill="none" stroke="#f0f0f0" stroke-width="0.8"/></svg>
<svg style="left:471.80px;top:99.20px;" width="6" height="6" viewBox="0 0 6 6"><path d="M1.20 2.10 L3 3.90 L4.80 2.10" fill="none" stroke="#dcdcdc" stroke-width="1.05" stroke-linecap="round" stroke-linejoin="round"/></svg>
<svg style="left:479.90px;top:97.70px;" width="9" height="9" viewBox="0 0 9 9"><path d="M0.8 1 H8.2 L5.4 4.6 V8 L3.6 7 V4.6 Z" fill="#f0f0f0"/></svg>
<svg style="left:491.00px;top:99.20px;" width="6" height="6" viewBox="0 0 6 6"><path d="M1.20 2.10 L3 3.90 L4.80 2.10" fill="none" stroke="#dcdcdc" stroke-width="1.05" stroke-linecap="round" stroke-linejoin="round"/></svg>
<svg style="left:499.00px;top:97.70px;" width="9" height="9" viewBox="0 0 9 9"><path d="M4.5 0.8 L8 2 V4.6 Q8 7 4.5 8.4 Q1 7 1 4.6 V2 Z" fill="#f0f0f0"/><path d="M2.8 4.4 L4 5.8 L6.4 3" fill="none" stroke="#303030" stroke-width="0.9"/></svg>
<div style="left:633.70px;top:96.60px;width:36.30px;height:10.70px;background:#282828;border-radius:2.5px;"></div>
<span style="left:637.30px;top:97.10px;font-size:7.0px;line-height:9.80px;color:#e4e4e4;letter-spacing:-0.089px;">Options</span>
<svg style="left:663.60px;top:99.20px;" width="6" height="6" viewBox="0 0 6 6"><path d="M1.20 2.10 L3 3.90 L4.80 2.10" fill="none" stroke="#dcdcdc" stroke-width="1.05" stroke-linecap="round" stroke-linejoin="round"/></svg>
<svg style="left:670.50px;top:119.00px;" width="5" height="6" viewBox="0 0 5 6"><path d="M3.6 0.8 L1.2 3 L3.6 5.2" fill="none" stroke="#bbb" stroke-width="0.8"/></svg>
<div style="left:71.40px;top:114.40px;width:22.40px;height:19.60px;background:#4772b3;border-radius:2.5px 2.5px 0 0;"></div>
<div style="left:71.40px;top:134.00px;width:22.40px;height:19.80px;background:#2a2a2a;border-radius:0 0 2.5px 2.5px;"></div>
<div style="left:71.40px;top:157.50px;width:22.40px;height:19.50px;background:#2a2a2a;border-radius:2.5px 2.5px 0 0;"></div>
<div style="left:71.40px;top:177.30px;width:22.40px;height:19.70px;background:#2a2a2a;border-radius:0;"></div>
<div style="left:71.40px;top:197.30px;width:22.40px;height:19.50px;background:#2a2a2a;border-radius:0;"></div>
<div style="left:71.40px;top:217.10px;width:22.40px;height:19.60px;background:#2a2a2a;border-radius:0 0 2.5px 2.5px;"></div>
<div style="left:71.40px;top:240.60px;width:22.40px;height:18.80px;background:#2a2a2a;border-radius:2.5px 2.5px 0 0;"></div>
<div style="left:71.40px;top:259.70px;width:22.40px;height:19.70px;background:#2a2a2a;border-radius:0 0 2.5px 2.5px;"></div>
<div style="left:71.40px;top:283.20px;width:22.40px;height:19.40px;background:#2a2a2a;border-radius:2.5px;"></div>
<svg style="left:74.55px;top:116.05px;" width="16.099999999999998" height="16.099999999999998" viewBox="0 0 14 14"><rect x="1.6" y="1.6" width="10.8" height="10.8" rx="1.6" fill="none" stroke="#f0a43c" stroke-width="1" stroke-dasharray="1.7 1.1"/><path d="M5.4 3.8 L9.8 8 L7.4 8 L6 10.2 Z" fill="#fff"/></svg>
<svg style="left:90.40px;top:130.60px;" width="3" height="3" viewBox="0 0 3 3"><path d="M3 0 V3 H0 Z" fill="#9a9a9a"/></svg>
<svg style="left:74.55px;top:135.85px;" width="16.099999999999998" height="16.099999999999998" viewBox="0 0 14 14"><circle cx="7" cy="7" r="5.7" fill="none" stroke="#f2f2f2" stroke-width="1.1"/><circle cx="7" cy="7" r="5.7" fill="none" stroke="#d8343c" stroke-width="1.1" stroke-dasharray="2.24 2.24"/><path d="M7 2.8 V5.6 M7 8.4 V11.2 M2.8 7 H5.6 M8.4 7 H11.2" stroke="#d0d0d0" stroke-width="0.7"/></svg>
<svg style="left:74.55px;top:159.25px;" width="16.099999999999998" height="16.099999999999998" viewBox="0 0 14 14"><path d="M7 1.6 V12.4 M1.6 7 H12.4" stroke="#e8e8e8" stroke-width="0.9"/><path d="M5.4 3.2 L7 0.8 L8.6 3.2 Z M5.4 10.8 L7 13.2 L8.6 10.8 Z M3.2 5.4 L0.8 7 L3.2 8.6 Z M10.8 5.4 L13.2 7 L10.8 8.6 Z" fill="#e8e8e8"/><circle cx="7" cy="7" r="1.6" fill="#2a2a2a"/></svg>
<svg style="left:74.55px;top:179.15px;" width="16.099999999999998" height="16.099999999999998" viewBox="0 0 14 14"><path d="M2.4 6 A4.8 4.8 0 0 1 11.2 4.6 M11.6 8 A4.8 4.8 0 0 1 2.8 9.4" fill="none" stroke="#e8e8e8" stroke-width="0.9"/><path d="M9.6 5.4 L12.6 5.6 L12 2.8 Z M4.4 8.6 L1.4 8.4 L2 11.2 Z" fill="#e8e8e8"/><circle cx="7" cy="7" r="1.7" fill="#e8e8e8"/></svg>
<svg style="left:74.55px;top:198.95px;" width="16.099999999999998" height="16.099999999999998" viewBox="0 0 14 14"><rect x="2.2" y="2.2" width="9.6" height="9.6" fill="none" stroke="#e8e8e8" stroke-width="0.9"/><rect x="2.2" y="7" width="4.8" height="4.8" fill="#e8e8e8"/><path d="M7 7 L10.6 3.4" stroke="#e8e8e8" stroke-width="0.9"/><path d="M8.4 3.2 H10.8 V5.6 Z" fill="#e8e8e8"/></svg>
<svg style="left:90.40px;top:213.40px;" width="3" height="3" viewBox="0 0 3 3"><path d="M3 0 V3 H0 Z" fill="#9a9a9a"/></svg>
<svg style="left:74.55px;top:218.85px;" width="16.099999999999998" height="16.099999999999998" viewBox="0 0 14 14"><circle cx="7" cy="7" r="4.9" fill="none" stroke="#e8e8e8" stroke-width="0.9"/><rect x="4.6" y="4.6" width="4.8" height="4.8" rx="0.6" fill="#e8e8e8"/><path d="M7 0.6 L8.4 2.6 H5.6 Z M7 13.4 L8.4 11.4 H5.6 Z M0.6 7 L2.6 5.6 V8.4 Z M13.4 7 L11.4 5.6 V8.4 Z" fill="#e8e8e8" stroke="#2a2a2a" stroke-width="0.5"/></svg>
<svg style="left:74.55px;top:241.95px;" width="16.099999999999998" height="16.099999999999998" viewBox="0 0 14 14"><path d="M3.2 8.6 L9.8 2 L11.4 3.6 L4.8 10.2 L2.6 10.8 Z" fill="#e8e8e8"/><path d="M2.6 11.8 C5 13.4 6.4 10.6 8.2 10.2 C10.2 9.8 11.2 11.2 12.6 12.4" fill="none" stroke="#7fd6aa" stroke-width="1"/></svg>
<svg style="left:90.40px;top:256.00px;" width="3" height="3" viewBox="0 0 3 3"><path d="M3 0 V3 H0 Z" fill="#9a9a9a"/></svg>
<svg style="left:74.55px;top:261.55px;" width="16.099999999999998" height="16.099999999999998" viewBox="0 0 14 14"><path d="M3.4 1.4 V11.6 H12.4" fill="none" stroke="#e8e8e8" stroke-width="1.7"/><path d="M4.4 5.4 A6 6 0 0 1 10.4 10.6 H4.4 Z" fill="#7fd6aa"/></svg>
<svg style="left:74.55px;top:284.85px;" width="16.099999999999998" height="16.099999999999998" viewBox="0 0 14 14"><path d="M4.4 5.6 L10 5.6 L12.4 3.8 L12.4 10 L10 12.4 L4.4 12.4 Z M10 5.6 V12.4 M4.4 5.6 L6.8 3.8 H12.4" fill="none" stroke="#7fd6aa" stroke-width="0.9" stroke-linejoin="round"/><path d="M3 0.6 L3.6 2.4 L5.4 3 L3.6 3.6 L3 5.4 L2.4 3.6 L0.6 3 L2.4 2.4 Z" fill="#7fd6aa"/></svg>
<svg style="left:90.40px;top:299.20px;" width="3" height="3" viewBox="0 0 3 3"><path d="M3 0 V3 H0 Z" fill="#9a9a9a"/></svg>
<span style="left:104.20px;top:113.80px;font-size:7.0px;line-height:9.80px;color:#fff;letter-spacing:-0.081px;text-shadow:0 0 1.5px #000,0 0.5px 1px rgba(0,0,0,.8);">User Perspective</span>
<span style="left:104.20px;top:123.90px;font-size:7.0px;line-height:9.80px;color:#fff;letter-spacing:0.001px;text-shadow:0 0 1.5px #000,0 0.5px 1px rgba(0,0,0,.8);">(1) Collection | Cube</span>
<svg style="left:620px;top:112px" width="56" height="52" viewBox="620 112 56 52">
<circle cx="642.7" cy="130" r="3.6" fill="rgba(200,60,70,0.18)" stroke="#b8404c" stroke-width="0.9"/>
<circle cx="628" cy="139.8" r="4.3" fill="#5d7d22" stroke="#83b31a" stroke-width="0.9"/>
<circle cx="646.3" cy="155" r="3.9" fill="rgba(60,110,200,0.3)" stroke="#3f78d6" stroke-width="0.9"/>
<path d="M646.4 138.2 L646.4 122" stroke="#3f86f0" stroke-width="1.1"/>
<path d="M646.4 138.2 L664 136.7" stroke="#83b31a" stroke-width="1.1"/>
<path d="M646.4 138.2 L649.4 145.8" stroke="#f0364f" stroke-width="1.1"/>
<circle cx="646.4" cy="121.8" r="4.5" fill="#3f86f0"/>
<circle cx="664.5" cy="136.6" r="4.5" fill="#83b31a"/>
<circle cx="649.7" cy="146.6" r="4.9" fill="#f0364f"/>
<text x="646.4" y="123.9" font-size="5.6" font-weight="bold" text-anchor="middle" fill="#10244a" font-family="Liberation Sans, sans-serif">Z</text>
<text x="664.6" y="138.7" font-size="5.6" font-weight="bold" text-anchor="middle" fill="#24380a" font-family="Liberation Sans, sans-serif">Y</text>
<text x="649.7" y="148.7" font-size="5.6" font-weight="bold" text-anchor="middle" fill="#4a0c14" font-family="Liberation Sans, sans-serif">X</text>
</svg>
<div style="left:655.10px;top:162.50px;width:15.00px;height:15.00px;background:#2c2c2c;border-radius:7.5px;"></div>
<div style="left:655.10px;top:180.20px;width:15.00px;height:15.00px;background:#2c2c2c;border-radius:7.5px;"></div>
<div style="left:655.10px;top:197.80px;width:15.00px;height:15.00px;background:#2c2c2c;border-radius:7.5px;"></div>
<div style="left:655.10px;top:215.20px;width:15.00px;height:15.00px;background:#2c2c2c;border-radius:7.5px;"></div>
<svg style="left:656.60px;top:164.00px;" width="12" height="12" viewBox="0 0 12 12"><circle cx="7" cy="4.9" r="3.5" fill="#e2e2e2"/><path d="M4.4 7.6 L1.6 10.4" stroke="#e2e2e2" stroke-width="1.7" stroke-linecap="round"/><path d="M5.2 4.9 H8.8 M7 3.1 V6.7" stroke="#2c2c2c" stroke-width="0.8"/></svg>
<svg style="left:656.60px;top:181.70px;" width="12" height="12" viewBox="0 0 12 12"><path d="M2.6 6.6 L2.3 3.6 Q2.4 2.9 3 2.9 Q3.5 3 3.6 3.6 L3.9 5.4 L4 2 Q4.1 1.3 4.7 1.3 Q5.3 1.3 5.3 2 L5.5 5 L5.9 1.5 Q6 0.8 6.6 0.9 Q7.2 1 7.2 1.7 L7 5.2 L7.8 2.6 Q8 2 8.6 2.1 Q9.1 2.3 9 3 L8.3 6.4 L9.6 5.2 Q10.2 4.8 10.7 5.2 Q11 5.6 10.6 6.1 L8.2 9.6 Q7.4 10.9 5.8 10.9 Q3.4 10.9 2.9 8.6 Z" fill="#e2e2e2"/></svg>
<svg style="left:656.60px;top:199.30px;" width="12" height="12" viewBox="0 0 12 12"><circle cx="4.4" cy="3.6" r="2" fill="none" stroke="#e2e2e2" stroke-width="1"/><circle cx="8.2" cy="3.4" r="1.6" fill="none" stroke="#e2e2e2" stroke-width="1"/><rect x="2.6" y="6.2" width="5.6" height="3.8" rx="0.8" fill="#e2e2e2"/><path d="M8.2 7.6 L10.6 6.4 V10 L8.2 8.8 Z" fill="#e2e2e2"/><path d="M1 5.4 Q3 7 6 6.4" fill="none" stroke="#e2e2e2" stroke-width="0.8"/></svg>
<svg style="left:656.60px;top:216.70px;" width="12" height="12" viewBox="0 0 12 12"><path d="M3.4 2 H8.6 L10.8 10 H1.2 Z" fill="none" stroke="#e2e2e2" stroke-width="1.1" stroke-linejoin="round"/><path d="M5.1 2 L4.4 10 M6.9 2 L7.6 10 M2.7 4.7 H9.3 M2 7.3 H10" stroke="#e2e2e2" stroke-width="0.9"/></svg>
<svg style="left:0;top:0" width="870" height="597" viewBox="0 0 870 597">
<defs><clipPath id="lowc"><polygon points="373.3,306.4 382.7,330.3 431.0,325.4 429.5,346.2 382.4,351.4 373.3,326.1"/></clipPath></defs>
<!-- camera -->
<g stroke="#000" stroke-width="0.55" fill="none" opacity="0.8">
<path d="M149.4 317.7 L196.3 299.3 M149.4 317.7 L226.4 311.6 M149.4 317.7 L221 336.9 M149.4 317.7 L192 323.4 M196.3 299.3 L226.4 311.6 L221 336.9 L192 323.4 Z"/>
</g>
<polygon points="201.8,298.6 214.5,288 221.8,307" fill="#000"/>
<!-- light -->
<path d="M477 207.5 L459.5 371.3" stroke="#1a1a1a" stroke-width="0.5" opacity="0.45"/>
<circle cx="477.2" cy="202.2" r="2.6" fill="none" stroke="#151515" stroke-width="0.7"/>
<circle cx="477.2" cy="202.2" r="5" fill="none" stroke="#151515" stroke-width="1.1" stroke-dasharray="1.2 1.42"/>
<!-- cube -->
<polygon points="373.4,285.7 383.0,307.9 382.4,351.4 373.3,326.1" fill="#bebfc1"/>
<polygon points="383.0,307.9 432.6,303.4 429.5,346.2 382.4,351.4" fill="#c5c5c6"/>
<polygon points="373.4,285.7 418.3,282.0 432.6,303.4 383.0,307.9" fill="#cdd0d5"/>
<g clip-path="url(#lowc)"><g transform="translate(67,79.3)">
<path d="M138.4 16.7 L-2197.6 427.4 M139.8 16.7 L-2153.8 427.4 M141.3 16.7 L-2110.0 427.4 M142.7 16.7 L-2066.3 427.4 M144.1 16.7 L-2022.5 427.4 M145.6 16.7 L-1978.7 427.4 M147.0 16.7 L-1934.9 427.4 M148.5 16.7 L-1891.1 427.4 M149.9 16.7 L-1847.4 427.4 M151.4 16.7 L-1803.6 427.4 M152.8 16.7 L-1759.8 427.4 M154.2 16.7 L-1716.0 427.4 M155.7 16.7 L-1672.3 427.4 M157.1 16.7 L-1628.5 427.4 M158.6 16.7 L-1584.7 427.4 M160.0 16.7 L-1540.9 427.4 M161.5 16.7 L-1497.2 427.4 M162.9 16.7 L-1453.4 427.4 M164.3 16.7 L-1409.6 427.4 M165.8 16.7 L-1365.8 427.4 M167.2 16.7 L-1322.1 427.4 M168.7 16.7 L-1278.3 427.4 M170.1 16.7 L-1234.5 427.4 M171.6 16.7 L-1190.7 427.4 M173.0 16.7 L-1147.0 427.4 M174.4 16.7 L-1103.2 427.4 M175.9 16.7 L-1059.4 427.4 M177.3 16.7 L-1015.6 427.4 M178.8 16.7 L-971.8 427.4 M180.2 16.7 L-928.1 427.4 M181.7 16.7 L-884.3 427.4 M183.1 16.7 L-840.5 427.4 M184.5 16.7 L-796.7 427.4 M186.0 16.7 L-753.0 427.4 M187.4 16.7 L-709.2 427.4 M188.9 16.7 L-665.4 427.4 M190.3 16.7 L-621.6 427.4 M191.8 16.7 L-577.9 427.4 M193.2 16.7 L-534.1 427.4 M194.7 16.7 L-490.3 427.4 M196.1 16.7 L-446.5 427.4 M197.5 16.7 L-402.8 427.4 M199.0 16.7 L-359.0 427.4 M200.4 16.7 L-315.2 427.4 M201.9 16.7 L-271.4 427.4 M203.3 16.7 L-227.7 427.4 M204.8 16.7 L-183.9 427.4 M206.2 16.7 L-140.1 427.4 M207.6 16.7 L-96.3 427.4 M209.1 16.7 L-52.6 427.4 M210.5 16.7 L-8.8 427.4 M212.0 16.7 L35.0 427.4 M213.4 16.7 L78.8 427.4 M214.9 16.7 L122.6 427.4 M216.3 16.7 L166.3 427.4 M217.7 16.7 L210.1 427.4 M219.2 16.7 L253.9 427.4 M220.6 16.7 L297.7 427.4 M222.1 16.7 L341.4 427.4 M223.5 16.7 L385.2 427.4 M226.4 16.7 L472.8 427.4 M227.8 16.7 L516.5 427.4 M229.3 16.7 L560.3 427.4 M230.7 16.7 L604.1 427.4 M232.2 16.7 L647.9 427.4 M233.6 16.7 L691.6 427.4 M235.1 16.7 L735.4 427.4 M236.5 16.7 L779.2 427.4 M237.9 16.7 L823.0 427.4 M239.4 16.7 L866.7 427.4 M240.8 16.7 L910.5 427.4 M242.3 16.7 L954.3 427.4 M243.7 16.7 L998.1 427.4 M245.2 16.7 L1041.9 427.4 M246.6 16.7 L1085.6 427.4 M248.0 16.7 L1129.4 427.4 M249.5 16.7 L1173.2 427.4 M250.9 16.7 L1217.0 427.4 M252.4 16.7 L1260.7 427.4 M253.8 16.7 L1304.5 427.4 M255.3 16.7 L1348.3 427.4 M256.7 16.7 L1392.1 427.4 M258.1 16.7 L1435.8 427.4 M259.6 16.7 L1479.6 427.4 M261.0 16.7 L1523.4 427.4 M262.5 16.7 L1567.2 427.4 M263.9 16.7 L1610.9 427.4 M265.4 16.7 L1654.7 427.4 M266.8 16.7 L1698.5 427.4 M268.2 16.7 L1742.3 427.4 M269.7 16.7 L1786.0 427.4 M271.1 16.7 L1829.8 427.4 M272.6 16.7 L1873.6 427.4 M274.0 16.7 L1917.4 427.4 M275.5 16.7 L1961.1 427.4 M276.9 16.7 L2004.9 427.4 M278.3 16.7 L2048.7 427.4 M279.8 16.7 L2092.5 427.4 M281.2 16.7 L2136.3 427.4 M282.7 16.7 L2180.0 427.4 M284.1 16.7 L2223.8 427.4 M285.6 16.7 L2267.6 427.4 M287.0 16.7 L2311.4 427.4 M288.4 16.7 L2355.1 427.4 M289.9 16.7 L2398.9 427.4 M291.3 16.7 L2442.7 427.4 M292.8 16.7 L2486.5 427.4 M294.2 16.7 L2530.2 427.4 M295.7 16.7 L2574.0 427.4 M297.1 16.7 L2617.8 427.4 M298.6 16.7 L2661.6 427.4 M300.0 16.7 L2705.3 427.4 M301.4 16.7 L2749.1 427.4 M302.9 16.7 L2792.9 427.4 M304.3 16.7 L2836.7 427.4 M305.8 16.7 L2880.4 427.4 M307.2 16.7 L2924.2 427.4 M308.7 16.7 L2968.0 427.4 M310.1 16.7 L3011.8 427.4 M311.5 16.7 L3055.6 427.4 M313.0 16.7 L3099.3 427.4 M314.4 16.7 L3143.1 427.4 M315.9 16.7 L3186.9 427.4 M317.3 16.7 L3230.7 427.4 M318.8 16.7 L3274.4 427.4 M320.2 16.7 L3318.2 427.4 M321.6 16.7 L3362.0 427.4 M323.1 16.7 L3405.8 427.4 M324.5 16.7 L3449.5 427.4 M326.0 16.7 L3493.3 427.4 M327.4 16.7 L3537.1 427.4 M328.9 16.7 L3580.9 427.4 M330.3 16.7 L3624.6 427.4 M331.7 16.7 L3668.4 427.4 M333.2 16.7 L3712.2 427.4 M334.6 16.7 L3756.0 427.4 M336.1 16.7 L3799.7 427.4 M337.5 16.7 L3843.5 427.4 M339.0 16.7 L3887.3 427.4 M-5.0 81.9 L613.4 64.3 M-5.0 83.2 L613.4 65.3 M-5.0 84.5 L613.4 66.3 M-5.0 85.8 L613.4 67.3 M-5.0 87.2 L613.4 68.4 M-5.0 88.6 L613.4 69.5 M-5.0 90.1 L613.4 70.6 M-5.0 91.6 L613.4 71.8 M-5.0 93.2 L613.4 73.1 M-5.0 94.9 L613.4 74.3 M-5.0 96.6 L613.4 75.7 M-5.0 98.3 L613.4 77.0 M-5.0 100.2 L613.4 78.5 M-5.0 102.1 L613.4 80.0 M-5.0 104.1 L613.4 81.5 M-5.0 106.1 L613.4 83.1 M-5.0 108.3 L613.4 84.8 M-5.0 110.5 L613.4 86.5 M-5.0 112.9 L613.4 88.3 M-5.0 115.3 L613.4 90.2 M-5.0 117.9 L613.4 92.2 M-5.0 120.5 L613.4 94.3 M-5.0 123.3 L613.4 96.5 M-5.0 126.3 L613.4 98.8 M-5.0 129.3 L613.4 101.2 M-5.0 132.6 L613.4 103.7 M-5.0 136.0 L613.4 106.3 M-5.0 139.6 L613.4 109.1 M-5.0 143.4 L613.4 112.1 M-5.0 147.4 L613.4 115.2 M-5.0 151.6 L613.4 118.5 M-5.0 156.1 L613.4 122.0 M-5.0 160.9 L613.4 125.7 M-5.0 166.0 L613.4 129.7 M-5.0 171.4 L613.4 133.9 M-5.0 177.2 L613.4 138.4 M-5.0 183.4 L613.4 143.2 M-5.0 190.1 L613.4 148.4 M-5.0 197.3 L613.4 154.0 M-5.0 205.1 L613.4 160.0 M-5.0 213.5 L613.4 166.5 M-5.0 222.6 L613.4 173.6 M-5.0 232.5 L613.4 181.4 M-5.0 243.4 L613.4 189.8 M-5.0 255.4 L613.4 199.2 M-5.0 283.4 L613.4 220.9 M-5.0 299.8 L613.4 233.6 M-5.0 318.2 L613.4 248.0 M-5.0 339.1 L613.4 264.2 M-5.0 363.0 L613.4 282.8 M-5.0 390.5 L613.4 304.2 M-5.0 422.6 L613.4 329.1 M-5.0 460.5 L613.4 358.6 M-5.0 505.8 L613.4 393.8 M-5.0 561.2 L613.4 436.9 M-5.0 630.2 L613.4 490.5 M-5.0 718.7 L613.4 559.3 M-5.0 836.2 L613.4 650.6 M-5.0 999.9 L613.4 777.9 M-5.0 1243.6 L613.4 967.3 M-5.0 1644.9 L613.4 1279.3 M-5.0 2429.9 L613.4 1889.6 M-5.0 4652.6 L613.4 3617.5" stroke="#9a9a9a" stroke-width="0.6" fill="none" opacity="0.8"/>
<path d="M340.1 248.5 L429.0 427.4" stroke="#b04a56" stroke-width="0.9"/>
</g></g>
<!-- 3d cursor -->
<circle cx="399.5" cy="315.2" r="5.3" fill="none" stroke="#fff" stroke-width="1"/>
<circle cx="399.5" cy="315.2" r="5.3" fill="none" stroke="#e0444c" stroke-width="1" stroke-dasharray="2.08 2.08"/>
<path d="M388.5 315.2 H395 M404 315.2 H410.8 M399.5 304.6 V310.8 M399.5 319.6 V325.8" stroke="#3a3a3a" stroke-width="0.55"/>
<circle cx="399.7" cy="315.3" r="1.2" fill="#f08a1c"/>
</svg>
<div style="left:0;top:0;width:155.2px;height:17.6px;transform-origin:0 0;transform:matrix3d(0.734482,-0.089022,0,-0.00051507,0.094666,1.049344,0,0.00018364,0,0,1,0,360.3000,251.1000,0,1);color:#fff;font-size:10.0px;font-weight:bold;"><span style="left:0;top:-1.65px;line-height:10px;letter-spacing:-0.000px;-webkit-text-stroke:0">J'ai supprimé le cube par défaut,</span><span style="left:0;top:8.55px;line-height:10px;letter-spacing:0.125px;-webkit-text-stroke:0">lui c'est son frère.</span></div>
<div style="left:67.00px;top:503.90px;width:608.40px;height:34.30px;background:#1d1d1d;border-radius:3.5px;"></div>
<div style="left:67.00px;top:503.90px;width:608.40px;height:14.40px;background:#303030;border-radius:3.5px 3.5px 0 0;"></div>
<svg style="left:73.20px;top:506.40px;" width="9.8" height="9.8" viewBox="0 0 9 9"><circle cx="4.5" cy="4.5" r="4" fill="#e6e6e6"/><path d="M5.4 2.2 L3.6 4.6 L5.4 6.8" fill="none" stroke="#303030" stroke-width="1.1"/></svg>
<svg style="left:82.30px;top:508.50px;" width="6" height="6" viewBox="0 0 6 6"><path d="M1.20 2.10 L3 3.90 L4.80 2.10" fill="none" stroke="#dcdcdc" stroke-width="1.05" stroke-linecap="round" stroke-linejoin="round"/></svg>
<div style="left:92.00px;top:506.10px;width:43.50px;height:10.30px;background:#282828;border-radius:2.5px;"></div>
<span style="left:97.00px;top:506.30px;font-size:7.0px;line-height:9.80px;color:#e4e4e4;letter-spacing:0.024px;">Playback</span>
<svg style="left:128.00px;top:508.40px;" width="6" height="6" viewBox="0 0 6 6"><path d="M1.20 2.10 L3 3.90 L4.80 2.10" fill="none" stroke="#dcdcdc" stroke-width="1.05" stroke-linecap="round" stroke-linejoin="round"/></svg>
<div style="left:137.30px;top:506.10px;width:34.90px;height:10.30px;background:#282828;border-radius:2.5px;"></div>
<span style="left:140.20px;top:506.30px;font-size:7.0px;line-height:9.80px;color:#e4e4e4;letter-spacing:-0.001px;">Keying</span>
<svg style="left:164.60px;top:508.40px;" width="6" height="6" viewBox="0 0 6 6"><path d="M1.20 2.10 L3 3.90 L4.80 2.10" fill="none" stroke="#dcdcdc" stroke-width="1.05" stroke-linecap="round" stroke-linejoin="round"/></svg>
<span style="left:176.80px;top:506.30px;font-size:7.0px;line-height:9.80px;color:#e4e4e4;letter-spacing:-0.012px;">View</span>
<span style="left:200.30px;top:506.30px;font-size:7.0px;line-height:9.80px;color:#e4e4e4;letter-spacing:-0.013px;">Marker</span>
<div style="left:317.00px;top:506.10px;width:10.80px;height:10.30px;background:#545454;border-radius:2.5px 0 0 2.5px;"></div>
<div style="left:328.30px;top:506.10px;width:10.70px;height:10.30px;background:#2a2a2a;border-radius:0 2.5px 2.5px 0;"></div>
<svg style="left:317.90px;top:506.80px;" width="9" height="9" viewBox="0 0 9 9"><circle cx="4.5" cy="4.5" r="2.6" fill="none" stroke="#a8a8a8" stroke-width="0.9"/></svg>
<svg style="left:330.70px;top:508.40px;" width="6" height="6" viewBox="0 0 6 6"><path d="M1.20 2.10 L3 3.90 L4.80 2.10" fill="none" stroke="#505050" stroke-width="1.05" stroke-linecap="round" stroke-linejoin="round"/></svg>
<div style="left:342.70px;top:506.10px;width:70.30px;height:10.30px;background:#545454;border-radius:2.5px;"></div>
<div style="left:354.17px;top:506.10px;width:0.50px;height:10.30px;background:#454545;"></div>
<div style="left:365.88px;top:506.10px;width:0.50px;height:10.30px;background:#454545;"></div>
<div style="left:377.60px;top:506.10px;width:0.50px;height:10.30px;background:#454545;"></div>
<div style="left:389.32px;top:506.10px;width:0.50px;height:10.30px;background:#454545;"></div>
<div style="left:401.03px;top:506.10px;width:0.50px;height:10.30px;background:#454545;"></div>
<svg style="left:344.06px;top:506.70px;" width="9" height="9" viewBox="0 0 9 9"><path d="M1.6 1.8 V7.2" stroke="#f0f0f0" stroke-width="1.1"/><path d="M7.4 1.8 V7.2 L3 4.5 Z" fill="#f0f0f0"/></svg>
<svg style="left:355.77px;top:506.70px;" width="9" height="9" viewBox="0 0 9 9"><path d="M3.4 1.8 L6 4.5 L3.4 7.2 L0.8 4.5 Z" fill="#f0f0f0"/><path d="M8.6 2.2 V6.8 L5.6 4.5 Z" fill="#f0f0f0"/></svg>
<svg style="left:367.49px;top:506.70px;" width="9" height="9" viewBox="0 0 9 9"><path d="M7.6 1.2 V7.8 L1.6 4.5 Z" fill="#f0f0f0"/></svg>
<svg style="left:379.21px;top:506.70px;" width="9" height="9" viewBox="0 0 9 9"><path d="M1.4 1.2 V7.8 L7.4 4.5 Z" fill="#f0f0f0"/></svg>
<svg style="left:390.93px;top:506.70px;" width="9" height="9" viewBox="0 0 9 9"><path d="M5.6 1.8 L8.2 4.5 L5.6 7.2 L3 4.5 Z" fill="#f0f0f0"/><path d="M0.4 2.2 V6.8 L3.4 4.5 Z" fill="#f0f0f0"/></svg>
<svg style="left:402.64px;top:506.70px;" width="9" height="9" viewBox="0 0 9 9"><path d="M7.4 1.8 V7.2" stroke="#f0f0f0" stroke-width="1.1"/><path d="M1.6 1.8 V7.2 L6 4.5 Z" fill="#f0f0f0"/></svg>
<div style="left:510.90px;top:506.10px;width:43.00px;height:10.30px;background:#545454;border-radius:2.5px;"></div>
<span style="left:530.45px;top:506.30px;font-size:7.0px;line-height:9.80px;color:#e4e4e4;">1</span>
<div style="left:557.60px;top:506.10px;width:10.70px;height:10.30px;background:#545454;border-radius:2.5px 0 0 2.5px;"></div>
<svg style="left:558.50px;top:506.60px;" width="9" height="9" viewBox="0 0 9 9"><circle cx="4.5" cy="5" r="3" fill="none" stroke="#d8d8d8" stroke-width="0.9"/><path d="M4.5 5 L5.8 3.6 M3.6 1 H5.4 M7 2 L7.8 2.8" stroke="#d8d8d8" stroke-width="0.8" fill="none"/></svg>
<div style="left:568.80px;top:506.10px;width:52.40px;height:10.30px;background:#545454;"></div>
<span style="left:577.90px;top:506.30px;font-size:7.0px;line-height:9.80px;color:#e4e4e4;letter-spacing:-0.077px;">Start</span>
<span style="left:608.55px;top:506.30px;font-size:7.0px;line-height:9.80px;color:#e4e4e4;">1</span>
<div style="left:621.90px;top:506.10px;width:48.80px;height:10.30px;background:#545454;border-radius:0 2.5px 2.5px 0;"></div>
<span style="left:630.20px;top:506.30px;font-size:7.0px;line-height:9.80px;color:#e4e4e4;letter-spacing:-0.552px;">End</span>
<span style="left:650.40px;top:506.30px;font-size:7.0px;line-height:9.80px;color:#e4e4e4;letter-spacing:0.173px;">250</span>
<span style="left:128.17px;top:520.58px;font-size:6.6px;line-height:9.24px;color:#b8b8b8;">20</span>
<span style="left:173.48px;top:520.58px;font-size:6.6px;line-height:9.24px;color:#b8b8b8;">40</span>
<span style="left:218.79px;top:520.58px;font-size:6.6px;line-height:9.24px;color:#b8b8b8;">60</span>
<span style="left:264.10px;top:520.58px;font-size:6.6px;line-height:9.24px;color:#b8b8b8;">80</span>
<span style="left:307.58px;top:520.58px;font-size:6.6px;line-height:9.24px;color:#b8b8b8;">100</span>
<span style="left:352.89px;top:520.58px;font-size:6.6px;line-height:9.24px;color:#b8b8b8;">120</span>
<span style="left:398.20px;top:520.58px;font-size:6.6px;line-height:9.24px;color:#b8b8b8;">140</span>
<span style="left:443.51px;top:520.58px;font-size:6.6px;line-height:9.24px;color:#b8b8b8;">160</span>
<span style="left:488.82px;top:520.58px;font-size:6.6px;line-height:9.24px;color:#b8b8b8;">180</span>
<span style="left:534.13px;top:520.58px;font-size:6.6px;line-height:9.24px;color:#b8b8b8;">200</span>
<span style="left:579.44px;top:520.58px;font-size:6.6px;line-height:9.24px;color:#b8b8b8;">220</span>
<span style="left:624.75px;top:520.58px;font-size:6.6px;line-height:9.24px;color:#b8b8b8;">240</span>
<div style="left:70.30px;top:531.40px;width:600.70px;height:5.70px;background:#4d4d4d;border-radius:2.85px;"></div>
<svg style="left:71.30px;top:531.70px;" width="5" height="5" viewBox="0 0 5 5"><circle cx="2.5" cy="2.5" r="1.7" fill="#222" stroke="#707070" stroke-width="0.6"/></svg>
<svg style="left:665.20px;top:531.70px;" width="5" height="5" viewBox="0 0 5 5"><circle cx="2.5" cy="2.5" r="1.7" fill="#222" stroke="#707070" stroke-width="0.6"/></svg>
<div style="left:88.60px;top:520.40px;width:0.80px;height:17.20px;background:#4772b3;"></div>
<div style="left:82.20px;top:520.30px;width:13.70px;height:9.50px;background:#4772b3;border-radius:2.5px;"></div>
<span style="left:87.16px;top:520.58px;font-size:6.6px;line-height:9.24px;color:#fff;">1</span>
<div style="left:131.54px;top:536.20px;width:0.60px;height:1.40px;background:#3a3a3a;"></div>
<div style="left:176.85px;top:536.20px;width:0.60px;height:1.40px;background:#3a3a3a;"></div>
<div style="left:222.16px;top:536.20px;width:0.60px;height:1.40px;background:#3a3a3a;"></div>
<div style="left:267.47px;top:536.20px;width:0.60px;height:1.40px;background:#3a3a3a;"></div>
<div style="left:312.78px;top:536.20px;width:0.60px;height:1.40px;background:#3a3a3a;"></div>
<div style="left:358.09px;top:536.20px;width:0.60px;height:1.40px;background:#3a3a3a;"></div>
<div style="left:403.40px;top:536.20px;width:0.60px;height:1.40px;background:#3a3a3a;"></div>
<div style="left:448.71px;top:536.20px;width:0.60px;height:1.40px;background:#3a3a3a;"></div>
<div style="left:494.02px;top:536.20px;width:0.60px;height:1.40px;background:#3a3a3a;"></div>
<div style="left:539.33px;top:536.20px;width:0.60px;height:1.40px;background:#3a3a3a;"></div>
<div style="left:584.64px;top:536.20px;width:0.60px;height:1.40px;background:#3a3a3a;"></div>
<div style="left:629.95px;top:536.20px;width:0.60px;height:1.40px;background:#3a3a3a;"></div>
<svg style="left:671.50px;top:528.50px;" width="4" height="8" viewBox="0 0 4 8"><path d="M3 0.6 Q1.4 1 2 3.4 Q2.4 6 0.8 6.6" fill="none" stroke="#9a9a9a" stroke-width="0.7"/></svg>
<svg style="left:66.50px;top:528.00px;" width="4" height="6" viewBox="0 0 4 6"><path d="M0.6 0.8 L2.8 3 L0.6 5.2" fill="none" stroke="#9a9a9a" stroke-width="0.7"/></svg>
<svg style="left:70.60px;top:539.80px;" width="9.4" height="10.6" viewBox="0 0 8 9"><rect x="1.6" y="0.8" width="5" height="7.4" rx="2.2" fill="none" stroke="#c8c8c8" stroke-width="0.8"/><path d="M1.6 3.6 H4.1 V0.8 H3.6 Q1.6 1 1.6 3 Z" fill="#c8c8c8"/><path d="M5.4 0.2 L7.6 0.2" stroke="#c8c8c8" stroke-width="0.5"/></svg>
<span style="left:83.30px;top:539.80px;font-size:7.0px;line-height:9.80px;color:#9c9c9c;letter-spacing:-0.283px;">Resize</span>
<svg style="left:108.20px;top:539.80px;" width="9.4" height="10.6" viewBox="0 0 8 9"><rect x="1.6" y="0.8" width="5" height="7.4" rx="2.2" fill="none" stroke="#c8c8c8" stroke-width="0.8"/><path d="M6.6 3.6 H4.1 V0.8 H4.6 Q6.6 1 6.6 3 Z" fill="#c8c8c8"/></svg>
<span style="left:118.90px;top:539.80px;font-size:7.0px;line-height:9.80px;color:#9c9c9c;letter-spacing:-0.118px;">Options</span>
<svg style="left:761.80px;top:540.30px;" width="10" height="10" viewBox="0 0 10 10"><circle cx="4.6" cy="4.8" r="3.6" fill="none" stroke="#8c8c8c" stroke-width="0.8"/><ellipse cx="4.6" cy="4.8" rx="1.6" ry="3.6" fill="none" stroke="#8c8c8c" stroke-width="0.6"/><path d="M1 3.6 H8.2 M1 6 H8.2" stroke="#8c8c8c" stroke-width="0.6"/></svg>
<span style="left:770.80px;top:545.68px;font-size:3.6px;line-height:5.04px;color:#8c8c8c;">1</span>
<div style="left:775.80px;top:540.80px;width:0.60px;height:7.80px;background:#8c8c8c;"></div>
<span style="left:779.30px;top:540.00px;font-size:7.0px;line-height:9.80px;color:#8c8c8c;letter-spacing:0.046px;">4.4.3</span>
<div style="left:677.40px;top:79.30px;width:125.60px;height:146.30px;background:#282828;border-radius:3.5px;"></div>
<div style="left:677.40px;top:79.30px;width:125.60px;height:15.70px;background:#303030;border-radius:3.5px 3.5px 0 0;"></div>
<div style="left:677.40px;top:106.96px;width:125.60px;height:11.72px;background:#2b2b2b;"></div>
<div style="left:677.40px;top:130.40px;width:125.60px;height:11.72px;background:#2b2b2b;"></div>
<div style="left:677.40px;top:153.84px;width:125.60px;height:11.72px;background:#2b2b2b;"></div>
<div style="left:677.40px;top:177.28px;width:125.60px;height:11.72px;background:#2b2b2b;"></div>
<div style="left:677.40px;top:200.72px;width:125.60px;height:11.72px;background:#2b2b2b;"></div>
<div style="left:681.80px;top:82.20px;width:17.70px;height:10.00px;background:#282828;border-radius:2.5px;"></div>
<svg style="left:683.30px;top:82.60px;" width="9" height="9" viewBox="0 0 9 9"><rect x="1" y="0.8" width="2.4" height="2.2" fill="#e0e0e0"/><path d="M2.2 3 V7.2 H4 M2.2 4.6 H4" fill="none" stroke="#e0e0e0" stroke-width="0.7"/><rect x="4.4" y="3.6" width="3.8" height="1.8" fill="#e0e0e0"/><rect x="4.4" y="6.2" width="3.8" height="1.8" fill="#e0e0e0"/></svg>
<svg style="left:692.80px;top:84.40px;" width="6" height="6" viewBox="0 0 6 6"><path d="M1.20 2.10 L3 3.90 L4.80 2.10" fill="none" stroke="#dcdcdc" stroke-width="1.05" stroke-linecap="round" stroke-linejoin="round"/></svg>
<div style="left:703.20px;top:82.20px;width:18.40px;height:10.00px;background:#282828;border-radius:2.5px;"></div>
<svg style="left:704.00px;top:82.00px;" width="10.2" height="10.2" viewBox="0 0 9 9"><rect x="1" y="3" width="5.4" height="5" rx="0.8" fill="#777"/><rect x="2.6" y="1.2" width="5.6" height="5.2" rx="0.8" fill="#d8d8d8"/><path d="M3.4 5.6 L4.8 3.6 L5.8 4.8 L6.4 4.2 L7.4 5.6 Z" fill="#444"/></svg>
<svg style="left:714.50px;top:84.40px;" width="6" height="6" viewBox="0 0 6 6"><path d="M1.20 2.10 L3 3.90 L4.80 2.10" fill="none" stroke="#dcdcdc" stroke-width="1.05" stroke-linecap="round" stroke-linejoin="round"/></svg>
<div style="left:731.60px;top:82.40px;width:67.40px;height:9.60px;background:#1d1d1d;border-radius:2.5px;"></div>
<svg style="left:734.50px;top:83.00px;" width="9" height="9" viewBox="0 0 9 9"><circle cx="5.2" cy="3.6" r="2.5" fill="none" stroke="#d8d8d8" stroke-width="0.9"/><path d="M3.4 5.4 L1 7.9" stroke="#d8d8d8" stroke-width="1.1" stroke-linecap="round"/></svg>
<span style="left:745.50px;top:82.20px;font-size:7.0px;line-height:9.80px;color:#5a5a5a;letter-spacing:-0.197px;">Search</span>
<svg style="left:689.50px;top:96.40px;" width="9" height="9" viewBox="0 0 9 9"><rect x="0.8" y="1" width="7.4" height="2.2" fill="#e0e0e0"/><path d="M1.4 3.8 H7.6 V8 H1.4 Z" fill="#e0e0e0"/><rect x="3.2" y="4.6" width="2.6" height="1.2" fill="#282828"/></svg>
<span style="left:702.70px;top:96.20px;font-size:7.0px;line-height:9.80px;color:#e4e4e4;letter-spacing:-0.040px;">Scene Collection</span>
<svg style="left:691.00px;top:110.02px;" width="6" height="6" viewBox="0 0 6 6"><path d="M0.66 1.83 L3 4.17 L5.34 1.83" fill="none" stroke="#d4d4d4" stroke-width="1.05" stroke-linecap="round" stroke-linejoin="round"/></svg>
<div style="left:700.40px;top:107.52px;width:11.00px;height:10.60px;background:#4a4a4a;border-radius:2px;"></div>
<svg style="left:701.40px;top:108.22px;" width="9" height="9" viewBox="0 0 9 9"><rect x="0.8" y="1" width="7.4" height="2.2" fill="#e0e0e0"/><path d="M1.4 3.8 H7.6 V8 H1.4 Z" fill="#e0e0e0"/><rect x="3.2" y="4.6" width="2.6" height="1.2" fill="#282828"/></svg>
<span style="left:714.00px;top:107.92px;font-size:7.0px;line-height:9.80px;color:#fff;letter-spacing:0.066px;">Collection</span>
<svg style="left:763.50px;top:108.52px;" width="9" height="9" viewBox="0 0 9 9"><rect x="1" y="1" width="6.6" height="6.6" rx="1" fill="#f0f0f0"/><path d="M2.4 4.4 L3.8 5.8 L6.4 2.6" fill="none" stroke="#222" stroke-width="1"/></svg>
<svg style="left:774.90px;top:108.32px;" width="9" height="9" viewBox="0 0 9 9"><path d="M0.6 4.5 Q4.5 0.6 8.4 4.5 Q4.5 8.4 0.6 4.5 Z" fill="none" stroke="#e6e6e6" stroke-width="0.9"/><circle cx="4.5" cy="4.5" r="1.5" fill="#e6e6e6"/></svg>
<svg style="left:786.60px;top:108.32px;" width="9" height="9" viewBox="0 0 9 9"><path d="M0.8 2.6 H2.8 L3.4 1.4 H5.6 L6.2 2.6 H8.2 V7.8 H0.8 Z" fill="#e6e6e6"/><circle cx="4.5" cy="5" r="1.5" fill="#282828"/><circle cx="4.5" cy="5" r="0.7" fill="#e6e6e6"/></svg>
<div style="left:693.60px;top:119.54px;width:0.50px;height:45.16px;background:#484848;"></div>
<svg style="left:702.60px;top:121.54px;" width="6" height="6" viewBox="0 0 6 6"><path d="M1.83 0.66 L4.17 3 L1.83 5.34" fill="none" stroke="#d4d4d4" stroke-width="1.0" stroke-linecap="round" stroke-linejoin="round"/></svg>
<span style="left:725.80px;top:119.64px;font-size:7.0px;line-height:9.80px;color:#e4e4e4;letter-spacing:-0.183px;">Camera</span>
<svg style="left:774.90px;top:120.04px;" width="9" height="9" viewBox="0 0 9 9"><path d="M0.6 4.5 Q4.5 0.6 8.4 4.5 Q4.5 8.4 0.6 4.5 Z" fill="none" stroke="#e6e6e6" stroke-width="0.9"/><circle cx="4.5" cy="4.5" r="1.5" fill="#e6e6e6"/></svg>
<svg style="left:786.60px;top:120.04px;" width="9" height="9" viewBox="0 0 9 9"><path d="M0.8 2.6 H2.8 L3.4 1.4 H5.6 L6.2 2.6 H8.2 V7.8 H0.8 Z" fill="#e6e6e6"/><circle cx="4.5" cy="5" r="1.5" fill="#282828"/><circle cx="4.5" cy="5" r="0.7" fill="#e6e6e6"/></svg>
<svg style="left:702.60px;top:133.26px;" width="6" height="6" viewBox="0 0 6 6"><path d="M1.83 0.66 L4.17 3 L1.83 5.34" fill="none" stroke="#d4d4d4" stroke-width="1.0" stroke-linecap="round" stroke-linejoin="round"/></svg>
<span style="left:725.80px;top:131.36px;font-size:7.0px;line-height:9.80px;color:#e4e4e4;letter-spacing:-0.134px;">Cube</span>
<svg style="left:774.90px;top:131.76px;" width="9" height="9" viewBox="0 0 9 9"><path d="M0.6 4.5 Q4.5 0.6 8.4 4.5 Q4.5 8.4 0.6 4.5 Z" fill="none" stroke="#e6e6e6" stroke-width="0.9"/><circle cx="4.5" cy="4.5" r="1.5" fill="#e6e6e6"/></svg>
<svg style="left:786.60px;top:131.76px;" width="9" height="9" viewBox="0 0 9 9"><path d="M0.8 2.6 H2.8 L3.4 1.4 H5.6 L6.2 2.6 H8.2 V7.8 H0.8 Z" fill="#e6e6e6"/><circle cx="4.5" cy="5" r="1.5" fill="#282828"/><circle cx="4.5" cy="5" r="0.7" fill="#e6e6e6"/></svg>
<svg style="left:702.60px;top:144.98px;" width="6" height="6" viewBox="0 0 6 6"><path d="M1.83 0.66 L4.17 3 L1.83 5.34" fill="none" stroke="#d4d4d4" stroke-width="1.0" stroke-linecap="round" stroke-linejoin="round"/></svg>
<span style="left:725.80px;top:143.08px;font-size:7.0px;line-height:9.80px;color:#e4e4e4;letter-spacing:-0.116px;">Light</span>
<svg style="left:774.90px;top:143.48px;" width="9" height="9" viewBox="0 0 9 9"><path d="M0.6 4.5 Q4.5 0.6 8.4 4.5 Q4.5 8.4 0.6 4.5 Z" fill="none" stroke="#e6e6e6" stroke-width="0.9"/><circle cx="4.5" cy="4.5" r="1.5" fill="#e6e6e6"/></svg>
<svg style="left:786.60px;top:143.48px;" width="9" height="9" viewBox="0 0 9 9"><path d="M0.8 2.6 H2.8 L3.4 1.4 H5.6 L6.2 2.6 H8.2 V7.8 H0.8 Z" fill="#e6e6e6"/><circle cx="4.5" cy="5" r="1.5" fill="#282828"/><circle cx="4.5" cy="5" r="0.7" fill="#e6e6e6"/></svg>
<svg style="left:702.60px;top:156.70px;" width="6" height="6" viewBox="0 0 6 6"><path d="M1.83 0.66 L4.17 3 L1.83 5.34" fill="none" stroke="#d4d4d4" stroke-width="1.0" stroke-linecap="round" stroke-linejoin="round"/></svg>
<span style="left:725.80px;top:154.80px;font-size:7.0px;line-height:9.80px;color:#e4e4e4;letter-spacing:0.216px;">Text</span>
<svg style="left:774.90px;top:155.20px;" width="9" height="9" viewBox="0 0 9 9"><path d="M0.6 4.5 Q4.5 0.6 8.4 4.5 Q4.5 8.4 0.6 4.5 Z" fill="none" stroke="#e6e6e6" stroke-width="0.9"/><circle cx="4.5" cy="4.5" r="1.5" fill="#e6e6e6"/></svg>
<svg style="left:786.60px;top:155.20px;" width="9" height="9" viewBox="0 0 9 9"><path d="M0.8 2.6 H2.8 L3.4 1.4 H5.6 L6.2 2.6 H8.2 V7.8 H0.8 Z" fill="#e6e6e6"/><circle cx="4.5" cy="5" r="1.5" fill="#282828"/><circle cx="4.5" cy="5" r="0.7" fill="#e6e6e6"/></svg>
<svg style="left:712.50px;top:120.04px;" width="10" height="9" viewBox="0 0 10 9"><circle cx="2.6" cy="2.4" r="1.7" fill="#e8974a"/><circle cx="6.2" cy="2.2" r="1.9" fill="#e8974a"/><rect x="1" y="4.2" width="6" height="3.8" rx="0.6" fill="#e8974a"/><path d="M7 5.4 L9.4 4.2 V8 L7 6.8 Z" fill="#e8974a"/></svg>
<div style="left:711.80px;top:131.06px;width:11.00px;height:10.40px;background:#555;border-radius:2px;"></div>
<svg style="left:712.80px;top:131.76px;" width="9" height="9" viewBox="0 0 9 9"><path d="M1.2 1.4 H7.8 L4.5 8 Z" fill="none" stroke="#e8974a" stroke-width="1.2" stroke-linejoin="round"/></svg>
<svg style="left:712.10px;top:142.68px;" width="10.4" height="10.4" viewBox="0 0 9 9"><path d="M4.5 0.8 A2.9 2.9 0 0 1 6.2 6 V6.8 H2.8 V6 A2.9 2.9 0 0 1 4.5 0.8 Z" fill="#e8974a"/><rect x="3.2" y="7.4" width="2.6" height="1" fill="#e8974a"/><path d="M3.8 3.6 L4.5 5 L5.2 3.6" stroke="#282828" stroke-width="0.5" fill="none"/></svg>
<span style="left:712.20px;top:148.25px;font-size:14.5px;line-height:20.30px;color:#e8974a;">a</span>
<svg style="left:752.80px;top:131.76px;" width="9" height="9" viewBox="0 0 9 9"><path d="M1.4 1.6 H7.6 L4.5 7.6 Z" fill="none" stroke="#1fb48a" stroke-width="0.8"/><circle cx="1.4" cy="1.6" r="0.9" fill="#1fb48a"/><circle cx="7.6" cy="1.6" r="0.9" fill="#1fb48a"/><circle cx="4.5" cy="7.6" r="0.9" fill="#1fb48a"/></svg>
<svg style="left:752.80px;top:143.48px;" width="9" height="9" viewBox="0 0 9 9"><path d="M6.8 2.4 A3 3 0 1 0 6.8 5.8" fill="none" stroke="#1fb48a" stroke-width="0.8"/><path d="M4.5 3.6 V8.4 M3.2 7 L4.5 8.4 L5.8 7" fill="none" stroke="#1fb48a" stroke-width="0.7"/><circle cx="4.5" cy="3.6" r="0.7" fill="#1fb48a"/></svg>
<span style="left:752.30px;top:148.25px;font-size:14.5px;line-height:20.30px;color:#1fb48a;-webkit-text-stroke:0;">a</span>
<div style="left:677.40px;top:228.10px;width:125.60px;height:309.40px;background:#303030;border-radius:3.5px;"></div>
<div style="left:677.40px;top:242.50px;width:15.80px;height:295.00px;background:#1d1d1d;border-radius:0 0 0 3.5px;"></div>
<div style="left:681.80px;top:230.30px;width:17.70px;height:9.70px;background:#282828;border-radius:2.5px;"></div>
<svg style="left:683.40px;top:230.80px;" width="9" height="9" viewBox="0 0 9 9"><rect x="0.8" y="1" width="7" height="2.8" rx="1.4" fill="#e6e6e6"/><rect x="0.8" y="5" width="7" height="2.8" rx="1.4" fill="#e6e6e6"/><circle cx="6.2" cy="2.4" r="0.8" fill="#282828"/><circle cx="2.4" cy="6.4" r="0.8" fill="#282828"/></svg>
<svg style="left:693.00px;top:232.50px;" width="6" height="6" viewBox="0 0 6 6"><path d="M1.20 2.10 L3 3.90 L4.80 2.10" fill="none" stroke="#dcdcdc" stroke-width="1.05" stroke-linecap="round" stroke-linejoin="round"/></svg>
<div style="left:713.90px;top:230.30px;width:67.30px;height:9.50px;background:#1d1d1d;border-radius:2.5px;"></div>
<svg style="left:716.60px;top:230.90px;" width="9" height="9" viewBox="0 0 9 9"><circle cx="5.2" cy="3.6" r="2.5" fill="none" stroke="#d8d8d8" stroke-width="0.9"/><path d="M3.4 5.4 L1 7.9" stroke="#d8d8d8" stroke-width="1.1" stroke-linecap="round"/></svg>
<span style="left:727.80px;top:230.30px;font-size:7.0px;line-height:9.80px;color:#5a5a5a;letter-spacing:-0.197px;">Search</span>
<div style="left:792.30px;top:230.30px;width:9.70px;height:9.70px;background:#252525;border-radius:2.5px 0 0 2.5px;"></div>
<svg style="left:794.00px;top:232.50px;" width="6" height="6" viewBox="0 0 6 6"><path d="M1.20 2.10 L3 3.90 L4.80 2.10" fill="none" stroke="#e8e8e8" stroke-width="1.05" stroke-linecap="round" stroke-linejoin="round"/></svg>
<div style="left:677.40px;top:472.50px;width:15.80px;height:16.50px;background:#303030;border-radius:2.5px 0 0 2.5px;"></div>
<svg style="left:680.40px;top:249.80px;" width="10" height="10" viewBox="0 0 10 10"><path d="M2.6 1 V5.2 M2.6 5.2 Q1.6 5.6 1.8 7.6 Q2 8.8 2.6 8.8 Q3.2 8.8 3.4 7.6 Q3.6 5.6 2.6 5.2" fill="#d6d6d6" stroke="#d6d6d6" stroke-width="0.8"/><path d="M5.4 1 V2.8 Q5.4 4.2 6.8 4.2 Q8.2 4.2 8.2 2.8 V1 M6.8 4.2 V8.8" fill="none" stroke="#d6d6d6" stroke-width="1"/></svg>
<svg style="left:680.40px;top:270.50px;" width="10" height="10" viewBox="0 0 10 10"><rect x="1.2" y="3" width="7.4" height="5.4" rx="0.8" fill="none" stroke="#d6d6d6" stroke-width="1"/><path d="M5.4 1.4 H7.4 V3" fill="none" stroke="#d6d6d6" stroke-width="0.9"/><path d="M7 4.6 V7" stroke="#d6d6d6" stroke-width="0.9"/></svg>
<svg style="left:680.40px;top:287.00px;" width="10" height="10" viewBox="0 0 10 10"><rect x="1.4" y="1.4" width="7.2" height="3" rx="0.6" fill="#d6d6d6"/><path d="M2.6 4.4 V8.4 H7.4 V4.4" fill="none" stroke="#d6d6d6" stroke-width="0.9"/><rect x="3.8" y="6" width="2.4" height="1.6" fill="#d6d6d6"/></svg>
<svg style="left:680.40px;top:303.20px;" width="10" height="10" viewBox="0 0 10 10"><rect x="1" y="3.6" width="5.4" height="5" rx="0.8" fill="#777"/><rect x="2.8" y="1.4" width="6" height="5.4" rx="0.8" fill="#d6d6d6"/><path d="M3.6 6 L5.2 3.8 L6.2 5 L6.8 4.4 L8 6 Z" fill="#555"/></svg>
<svg style="left:680.40px;top:319.60px;" width="10" height="10" viewBox="0 0 10 10"><path d="M3 1.2 L5 5.8 A2.1 2.1 0 1 1 1 5.8 Z" fill="#9a9a9a"/><circle cx="7" cy="6.4" r="1.7" fill="none" stroke="#d6d6d6" stroke-width="0.9"/><circle cx="7.2" cy="2.6" r="1" fill="#d6d6d6"/></svg>
<svg style="left:680.40px;top:336.30px;" width="10" height="10" viewBox="0 0 10 10"><circle cx="5" cy="5" r="3.6" fill="none" stroke="#c24b56" stroke-width="1"/><path d="M2.2 3 Q4.6 4 3.8 6 T4.6 8.4 M6.2 1.8 Q5.6 3.4 7.2 4 T8.4 6" fill="none" stroke="#c24b56" stroke-width="1"/></svg>
<svg style="left:680.40px;top:355.70px;" width="10" height="10" viewBox="0 0 10 10"><rect x="1" y="1.4" width="8" height="2.4" fill="#d6d6d6"/><path d="M1.8 4.4 H8.2 V8.8 H1.8 Z" fill="none" stroke="#d6d6d6" stroke-width="1"/><rect x="3.8" y="5.6" width="2.4" height="1.4" fill="#d6d6d6"/></svg>
<svg style="left:680.40px;top:377.30px;" width="10" height="10" viewBox="0 0 10 10"><rect x="2.8" y="2.8" width="4.4" height="4.4" fill="#e8883a"/><path d="M0.8 2.8 V0.8 H2.8 M7.2 0.8 H9.2 V2.8 M9.2 7.2 V9.2 H7.2 M2.8 9.2 H0.8 V7.2" fill="none" stroke="#e8883a" stroke-width="0.9"/></svg>
<svg style="left:680.40px;top:393.00px;" width="10" height="10" viewBox="0 0 10 10"><path d="M7.8 1 A2.6 2.6 0 0 0 5 4.4 L1.2 8 L2.2 9 L6 5.4 A2.6 2.6 0 0 0 9 2.4 L7.4 3.8 L6.4 2.8 Z" fill="#5a86d0"/></svg>
<svg style="left:680.40px;top:410.00px;" width="10" height="10" viewBox="0 0 10 10"><circle cx="2.4" cy="1.8" r="1.1" fill="#5a86d0"/><circle cx="8" cy="3" r="1" fill="#5a86d0"/><circle cx="7.6" cy="8" r="1" fill="#5a86d0"/><path d="M2.4 1.8 L8 3 M2.4 1.8 L7.6 8 M2.4 1.8 V8.6" stroke="#5a86d0" stroke-width="0.7" fill="none"/></svg>
<svg style="left:680.40px;top:426.60px;" width="10" height="10" viewBox="0 0 10 10"><path d="M7.4 2.4 A3.4 3.4 0 1 0 8.2 6.4" fill="none" stroke="#5a86d0" stroke-width="1"/><circle cx="5" cy="5" r="1.3" fill="#5a86d0"/><circle cx="8" cy="2" r="0.9" fill="#5a86d0"/></svg>
<svg style="left:680.40px;top:443.00px;" width="10" height="10" viewBox="0 0 10 10"><ellipse cx="4" cy="5.8" rx="3" ry="2.5" fill="#5a86d0" opacity="0.75" transform="rotate(-30 4 5.8)"/><ellipse cx="6.2" cy="4.2" rx="3" ry="2.5" fill="#5a86d0" transform="rotate(-30 6.2 4.2)"/><ellipse cx="4.4" cy="5.6" rx="1.2" ry="0.9" fill="none" stroke="#1d1d1d" stroke-width="0.7" transform="rotate(-30 4.4 5.6)"/></svg>
<svg style="left:680.40px;top:459.70px;" width="10" height="10" viewBox="0 0 10 10"><path d="M1.6 2 H8.4 L5 8.2 Z" fill="none" stroke="#1fa27e" stroke-width="1.3" stroke-linejoin="round"/><circle cx="1.6" cy="2" r="1.3" fill="#1fa27e"/><circle cx="8.4" cy="2" r="1.3" fill="#1fa27e"/><circle cx="5" cy="8.2" r="1.3" fill="#1fa27e"/></svg>
<svg style="left:680.40px;top:475.70px;" width="10" height="10" viewBox="0 0 10 10"><circle cx="5" cy="5" r="3.7" fill="#e0606a"/><path d="M5 5 L5 1.3 A3.7 3.7 0 0 1 8.7 5 Z" fill="#303030" opacity="0.55"/><path d="M5 5 L1.6 6.6 A3.7 3.7 0 0 0 5 8.7 Z" fill="#303030" opacity="0.55"/></svg>
<svg style="left:699.00px;top:248.30px;" width="9" height="9" viewBox="0 0 9 9"><rect x="2.6" y="2.6" width="3.8" height="3.8" fill="#e0e0e0"/><path d="M1 2.8 V1 H2.8 M6.2 1 H8 V2.8 M8 6.2 V8 H6.2 M2.8 8 H1 V6.2" fill="none" stroke="#e0e0e0" stroke-width="0.8"/></svg>
<span style="left:712.70px;top:247.90px;font-size:7.0px;line-height:9.80px;color:#e4e4e4;">Cu...</span>
<svg style="left:731.00px;top:249.80px;" width="6" height="6" viewBox="0 0 6 6"><path d="M1.70 0.39 L4.30 3 L1.70 5.61" fill="none" stroke="#d8d8d8" stroke-width="1.0" stroke-linecap="round" stroke-linejoin="round"/></svg>
<svg style="left:741.20px;top:248.30px;" width="9" height="9" viewBox="0 0 9 9"><circle cx="4.5" cy="4.5" r="3.7" fill="#e6e6e6"/><path d="M4.5 4.5 L4.5 0.8 A3.7 3.7 0 0 1 8.2 4.5 Z" fill="#303030"/><path d="M4.5 4.5 L1.3 6.3 A3.7 3.7 0 0 0 4.5 8.2 Z" fill="#303030"/><circle cx="4.5" cy="4.5" r="3.7" fill="none" stroke="#e6e6e6" stroke-width="0.7"/></svg>
<span style="left:755.00px;top:247.90px;font-size:7.0px;line-height:9.80px;color:#e4e4e4;letter-spacing:-0.057px;">Mate...</span>
<svg style="left:787.50px;top:248.30px;" width="9" height="9" viewBox="0 0 9 9"><path d="M5.2 1.2 L7.8 3.8 L6.6 4.2 L5.4 5.4 L5.2 7 L2 3.8 L3.6 3.6 L4.8 2.4 Z M3.4 5.6 L1.2 7.8" fill="none" stroke="#9a9a9a" stroke-width="0.8" stroke-linejoin="round"/></svg>
<div style="left:698.80px;top:268.60px;width:82.20px;height:44.30px;background:#282828;border-radius:2.5px;"></div>
<div style="left:701.00px;top:271.20px;width:77.50px;height:10.90px;background:#4772b3;border-radius:2px;"></div>
<svg style="left:704.60px;top:272.50px;" width="9" height="9" viewBox="0 0 9 9"><defs><radialGradient id="mg" cx="0.35" cy="0.35" r="0.7"><stop offset="0" stop-color="#f4f4f4"/><stop offset="1" stop-color="#8a8a8a"/></radialGradient></defs><circle cx="4.5" cy="4.3" r="3.5" fill="url(#mg)"/></svg>
<span style="left:718.50px;top:271.80px;font-size:7.0px;line-height:9.80px;color:#fff;letter-spacing:0.013px;">Material</span>
<svg style="left:703.80px;top:307.20px;" width="5" height="5" viewBox="0 0 5 5"><path d="M1 0.8 L3.8 2.4 L1 4 Z" fill="#c8c8c8"/></svg>
<div style="left:742.00px;top:306.80px;width:0.90px;height:0.90px;background:#707070;"></div>
<div style="left:742.00px;top:308.70px;width:0.90px;height:0.90px;background:#707070;"></div>
<div style="left:743.80px;top:306.80px;width:0.90px;height:0.90px;background:#707070;"></div>
<div style="left:743.80px;top:308.70px;width:0.90px;height:0.90px;background:#707070;"></div>
<div style="left:745.60px;top:306.80px;width:0.90px;height:0.90px;background:#707070;"></div>
<div style="left:745.60px;top:308.70px;width:0.90px;height:0.90px;background:#707070;"></div>
<div style="left:747.40px;top:306.80px;width:0.90px;height:0.90px;background:#707070;"></div>
<div style="left:747.40px;top:308.70px;width:0.90px;height:0.90px;background:#707070;"></div>
<div style="left:786.70px;top:268.30px;width:10.90px;height:11.30px;background:#545454;border-radius:2.5px 2.5px 0 0;"></div>
<div style="left:786.70px;top:280.00px;width:10.90px;height:11.00px;background:#545454;border-radius:0 0 2.5px 2.5px;"></div>
<svg style="left:788.20px;top:270.00px;" width="8" height="8" viewBox="0 0 8 8"><path d="M4 1.6 V6.4 M1.6 4 H6.4" stroke="#d0d0d0" stroke-width="1"/></svg>
<svg style="left:788.20px;top:281.50px;" width="8" height="8" viewBox="0 0 8 8"><path d="M1.6 4 H6.4" stroke="#d0d0d0" stroke-width="1"/></svg>
<div style="left:786.70px;top:294.60px;width:10.90px;height:10.80px;background:#282828;border-radius:2.5px;"></div>
<svg style="left:789.10px;top:297.10px;" width="6" height="6" viewBox="0 0 6 6"><path d="M0.84 1.92 L3 4.08 L5.16 1.92" fill="none" stroke="#e8e8e8" stroke-width="1.05" stroke-linecap="round" stroke-linejoin="round"/></svg>
<div style="left:698.80px;top:318.00px;width:17.00px;height:10.00px;background:#282828;border-radius:2.5px;"></div>
<svg style="left:700.00px;top:318.50px;" width="9" height="9" viewBox="0 0 9 9"><circle cx="4.5" cy="4.5" r="3.7" fill="#e6e6e6"/><path d="M4.5 4.5 L4.5 0.8 A3.7 3.7 0 0 1 8.2 4.5 Z" fill="#282828"/><path d="M4.5 4.5 L1.3 6.3 A3.7 3.7 0 0 0 4.5 8.2 Z" fill="#282828"/><circle cx="4.5" cy="4.5" r="3.7" fill="none" stroke="#e6e6e6" stroke-width="0.7"/></svg>
<svg style="left:708.70px;top:320.30px;" width="6" height="6" viewBox="0 0 6 6"><path d="M1.20 2.10 L3 3.90 L4.80 2.10" fill="none" stroke="#dcdcdc" stroke-width="1.05" stroke-linecap="round" stroke-linejoin="round"/></svg>
<div style="left:716.60px;top:318.00px;width:22.40px;height:10.00px;background:#1d1d1d;border-radius:2.5px 0 0 2.5px;"></div>
<span style="left:720.20px;top:318.10px;font-size:7.0px;line-height:9.80px;color:#e4e4e4;letter-spacing:-0.152px;">Ma...</span>
<div style="left:739.00px;top:318.00px;width:35.20px;height:10.00px;background:#545454;border-radius:0 2.5px 2.5px 0;"></div>
<div style="left:751.20px;top:318.00px;width:0.50px;height:10.00px;background:#454545;"></div>
<div style="left:762.80px;top:318.00px;width:0.50px;height:10.00px;background:#454545;"></div>
<svg style="left:740.70px;top:318.50px;" width="9" height="9" viewBox="0 0 9 9"><path d="M4.5 0.8 L8 2 V4.6 Q8 7 4.5 8.4 Q1 7 1 4.6 V2 Z" fill="none" stroke="#9a9a9a" stroke-width="0.8"/></svg>
<svg style="left:752.70px;top:318.50px;" width="9" height="9" viewBox="0 0 9 9"><path d="M3.2 1.4 H6.2 L7.8 3 V6.4 H3.2 Z M6.2 1.4 V3 H7.8" fill="none" stroke="#d8d8d8" stroke-width="0.8" stroke-linejoin="round"/><path d="M3.2 3 H1.6 V8 H6 V6.4" fill="none" stroke="#d8d8d8" stroke-width="0.8" stroke-linejoin="round"/></svg>
<svg style="left:764.20px;top:318.50px;" width="9" height="9" viewBox="0 0 9 9"><path d="M2.4 2.4 L6.6 6.6 M6.6 2.4 L2.4 6.6" stroke="#d8d8d8" stroke-width="0.9"/></svg>
<div style="left:780.50px;top:318.00px;width:16.90px;height:10.00px;background:#282828;border-radius:2.5px;"></div>
<svg style="left:781.80px;top:318.50px;" width="9" height="9" viewBox="0 0 9 9"><path d="M1.4 1.8 H7.6 L4.5 7.6 Z" fill="none" stroke="#e6e6e6" stroke-width="0.9"/><circle cx="1.4" cy="1.8" r="1" fill="#e6e6e6"/><circle cx="7.6" cy="1.8" r="1" fill="#e6e6e6"/><circle cx="4.5" cy="7.6" r="1" fill="#e6e6e6"/></svg>
<svg style="left:790.50px;top:320.30px;" width="6" height="6" viewBox="0 0 6 6"><path d="M1.20 2.10 L3 3.90 L4.80 2.10" fill="none" stroke="#dcdcdc" stroke-width="1.05" stroke-linecap="round" stroke-linejoin="round"/></svg>
<div style="left:697.80px;top:334.40px;width:100.20px;height:14.20px;background:#3d3d3d;border-radius:2.5px;"></div>
<svg style="left:702.00px;top:338.60px;" width="6" height="6" viewBox="0 0 6 6"><path d="M1.70 0.39 L4.30 3 L1.70 5.61" fill="none" stroke="#d8d8d8" stroke-width="1.0" stroke-linecap="round" stroke-linejoin="round"/></svg>
<span style="left:710.70px;top:336.70px;font-size:7.0px;line-height:9.80px;color:#e4e4e4;letter-spacing:-0.085px;">Preview</span>
<div style="left:786.80px;top:340.00px;width:1.25px;height:1.25px;background:#6a6a6a;"></div>
<div style="left:786.80px;top:342.10px;width:1.25px;height:1.25px;background:#6a6a6a;"></div>
<div style="left:788.75px;top:340.00px;width:1.25px;height:1.25px;background:#6a6a6a;"></div>
<div style="left:788.75px;top:342.10px;width:1.25px;height:1.25px;background:#6a6a6a;"></div>
<div style="left:790.70px;top:340.00px;width:1.25px;height:1.25px;background:#6a6a6a;"></div>
<div style="left:790.70px;top:342.10px;width:1.25px;height:1.25px;background:#6a6a6a;"></div>
<div style="left:792.65px;top:340.00px;width:1.25px;height:1.25px;background:#6a6a6a;"></div>
<div style="left:792.65px;top:342.10px;width:1.25px;height:1.25px;background:#6a6a6a;"></div>
<div style="left:697.80px;top:350.60px;width:100.20px;height:186.90px;background:#3d3d3d;border-radius:2.5px 2.5px 0 0;"></div>
<div style="left:697.80px;top:364.50px;width:100.20px;height:173.00px;background:#3c3c3c;"></div>
<svg style="left:702.00px;top:354.50px;" width="6" height="6" viewBox="0 0 6 6"><path d="M0.39 1.70 L3 4.30 L5.61 1.70" fill="none" stroke="#d8d8d8" stroke-width="1.05" stroke-linecap="round" stroke-linejoin="round"/></svg>
<span style="left:710.70px;top:352.50px;font-size:7.0px;line-height:9.80px;color:#e4e4e4;letter-spacing:-0.046px;">Surface</span>
<div style="left:786.80px;top:355.40px;width:1.25px;height:1.25px;background:#6a6a6a;"></div>
<div style="left:786.80px;top:357.50px;width:1.25px;height:1.25px;background:#6a6a6a;"></div>
<div style="left:788.75px;top:355.40px;width:1.25px;height:1.25px;background:#6a6a6a;"></div>
<div style="left:788.75px;top:357.50px;width:1.25px;height:1.25px;background:#6a6a6a;"></div>
<div style="left:790.70px;top:355.40px;width:1.25px;height:1.25px;background:#6a6a6a;"></div>
<div style="left:790.70px;top:357.50px;width:1.25px;height:1.25px;background:#6a6a6a;"></div>
<div style="left:792.65px;top:355.40px;width:1.25px;height:1.25px;background:#6a6a6a;"></div>
<div style="left:792.65px;top:357.50px;width:1.25px;height:1.25px;background:#6a6a6a;"></div>
<span style="left:707.70px;top:369.70px;font-size:7.0px;line-height:9.80px;color:#e4e4e4;letter-spacing:-0.046px;">Surface</span>
<div style="left:737.30px;top:369.60px;width:43.70px;height:10.00px;background:#282828;border-radius:2.5px;"></div>
<svg style="left:739.20px;top:371.60px;" width="6" height="6" viewBox="0 0 6 6"><circle cx="3" cy="3" r="2.1" fill="#4ec24e"/></svg>
<span style="left:749.00px;top:369.70px;font-size:7.0px;line-height:9.80px;color:#e4e4e4;letter-spacing:-0.057px;">Principle...</span>
<span style="left:704.40px;top:390.50px;font-size:7.0px;line-height:9.80px;color:#e4e4e4;letter-spacing:-0.188px;">Base C...</span>
<div style="left:737.30px;top:390.15px;width:10.90px;height:10.50px;background:#282828;border-radius:2.5px 0 0 2.5px;"></div>
<svg style="left:739.80px;top:392.40px;" width="6" height="6" viewBox="0 0 6 6"><circle cx="3" cy="3" r="1.9" fill="#c7c729"/></svg>
<div style="left:748.20px;top:390.15px;width:32.80px;height:10.50px;background:#e7e7e7;border-radius:0 2.5px 2.5px 0;"></div>
<svg style="left:785.60px;top:393.40px;" width="4" height="4" viewBox="0 0 4 4"><circle cx="2" cy="2" r="1.3" fill="#e6e6e6"/></svg>
<span style="left:707.00px;top:404.80px;font-size:7.0px;line-height:9.80px;color:#e4e4e4;letter-spacing:0.096px;">Metallic</span>
<div style="left:737.30px;top:404.45px;width:10.90px;height:10.50px;background:#282828;border-radius:2.5px 0 0 2.5px;"></div>
<svg style="left:739.80px;top:406.70px;" width="6" height="6" viewBox="0 0 6 6"><circle cx="3" cy="3" r="1.9" fill="#a1a1a1"/></svg>
<div style="left:748.20px;top:404.45px;width:32.80px;height:10.50px;background:#545454;border-radius:0 2.5px 2.5px 0;"></div>
<span style="left:755.84px;top:404.80px;font-size:7.0px;line-height:9.80px;color:#f0f0f0;">0.000</span>
<svg style="left:785.60px;top:407.70px;" width="4" height="4" viewBox="0 0 4 4"><circle cx="2" cy="2" r="1.3" fill="#e6e6e6"/></svg>
<span style="left:702.60px;top:419.40px;font-size:7.0px;line-height:9.80px;color:#e4e4e4;letter-spacing:-0.162px;">Roughn...</span>
<div style="left:737.30px;top:419.05px;width:10.90px;height:10.50px;background:#282828;border-radius:2.5px 0 0 2.5px;"></div>
<svg style="left:739.80px;top:421.30px;" width="6" height="6" viewBox="0 0 6 6"><circle cx="3" cy="3" r="1.9" fill="#a1a1a1"/></svg>
<div style="left:748.20px;top:419.05px;width:32.80px;height:10.50px;background:#545454;border-radius:0 2.5px 2.5px 0;"></div>
<div style="left:748.20px;top:419.05px;width:16.40px;height:10.50px;background:#4772b3;"></div>
<span style="left:755.84px;top:419.40px;font-size:7.0px;line-height:9.80px;color:#f0f0f0;">0.500</span>
<svg style="left:785.60px;top:422.30px;" width="4" height="4" viewBox="0 0 4 4"><circle cx="2" cy="2" r="1.3" fill="#e6e6e6"/></svg>
<span style="left:719.20px;top:433.90px;font-size:7.0px;line-height:9.80px;color:#e4e4e4;letter-spacing:-0.048px;">IOR</span>
<div style="left:737.30px;top:433.55px;width:10.90px;height:10.50px;background:#282828;border-radius:2.5px 0 0 2.5px;"></div>
<svg style="left:739.80px;top:435.80px;" width="6" height="6" viewBox="0 0 6 6"><circle cx="3" cy="3" r="1.9" fill="#a1a1a1"/></svg>
<div style="left:748.20px;top:433.55px;width:32.80px;height:10.50px;background:#545454;border-radius:0 2.5px 2.5px 0;"></div>
<span style="left:755.84px;top:433.90px;font-size:7.0px;line-height:9.80px;color:#f0f0f0;">1.450</span>
<svg style="left:785.60px;top:436.80px;" width="4" height="4" viewBox="0 0 4 4"><circle cx="2" cy="2" r="1.3" fill="#e6e6e6"/></svg>
<span style="left:714.10px;top:448.50px;font-size:7.0px;line-height:9.80px;color:#e4e4e4;letter-spacing:-0.101px;">Alpha</span>
<div style="left:737.30px;top:448.15px;width:10.90px;height:10.50px;background:#282828;border-radius:2.5px 0 0 2.5px;"></div>
<svg style="left:739.80px;top:450.40px;" width="6" height="6" viewBox="0 0 6 6"><circle cx="3" cy="3" r="1.9" fill="#a1a1a1"/></svg>
<div style="left:748.20px;top:448.15px;width:32.80px;height:10.50px;background:#545454;border-radius:0 2.5px 2.5px 0;"></div>
<div style="left:748.20px;top:448.15px;width:32.80px;height:10.50px;background:#4772b3;border-radius:0 2.5px 2.5px 0;"></div>
<span style="left:755.84px;top:448.50px;font-size:7.0px;line-height:9.80px;color:#f0f0f0;">1.000</span>
<svg style="left:785.60px;top:451.40px;" width="4" height="4" viewBox="0 0 4 4"><circle cx="2" cy="2" r="1.3" fill="#e6e6e6"/></svg>
<span style="left:709.70px;top:462.90px;font-size:7.0px;line-height:9.80px;color:#e4e4e4;letter-spacing:-0.127px;">Normal</span>
<div style="left:737.30px;top:463.00px;width:43.70px;height:9.70px;background:#282828;border-radius:2.5px;"></div>
<svg style="left:739.80px;top:464.80px;" width="6" height="6" viewBox="0 0 6 6"><circle cx="3" cy="3" r="1.9" fill="#6363c7"/></svg>
<span style="left:749.00px;top:462.90px;font-size:7.0px;line-height:9.80px;color:#e4e4e4;letter-spacing:0.117px;">Default</span>
<svg style="left:705.20px;top:479.20px;" width="6" height="6" viewBox="0 0 6 6"><path d="M1.70 0.39 L4.30 3 L1.70 5.61" fill="none" stroke="#d8d8d8" stroke-width="1.0" stroke-linecap="round" stroke-linejoin="round"/></svg>
<span style="left:717.50px;top:477.30px;font-size:7.0px;line-height:9.80px;color:#e4e4e4;letter-spacing:-0.023px;">Diffuse</span>
<svg style="left:705.20px;top:493.70px;" width="6" height="6" viewBox="0 0 6 6"><path d="M1.70 0.39 L4.30 3 L1.70 5.61" fill="none" stroke="#d8d8d8" stroke-width="1.0" stroke-linecap="round" stroke-linejoin="round"/></svg>
<span style="left:717.50px;top:491.80px;font-size:7.0px;line-height:9.80px;color:#e4e4e4;letter-spacing:-0.061px;">Subsurface</span>
<svg style="left:705.20px;top:508.00px;" width="6" height="6" viewBox="0 0 6 6"><path d="M1.70 0.39 L4.30 3 L1.70 5.61" fill="none" stroke="#d8d8d8" stroke-width="1.0" stroke-linecap="round" stroke-linejoin="round"/></svg>
<span style="left:717.50px;top:506.10px;font-size:7.0px;line-height:9.80px;color:#e4e4e4;letter-spacing:-0.016px;">Specular</span>
<svg style="left:705.20px;top:522.50px;" width="6" height="6" viewBox="0 0 6 6"><path d="M1.70 0.39 L4.30 3 L1.70 5.61" fill="none" stroke="#d8d8d8" stroke-width="1.0" stroke-linecap="round" stroke-linejoin="round"/></svg>
<span style="left:717.50px;top:520.60px;font-size:7.0px;line-height:9.80px;color:#e4e4e4;letter-spacing:-0.114px;">Transmission</span>
<div style="left:799.20px;top:244.50px;width:1.60px;height:122.20px;background:#4f4f4f;border-radius:0.8px;"></div>
</div></body></html>
